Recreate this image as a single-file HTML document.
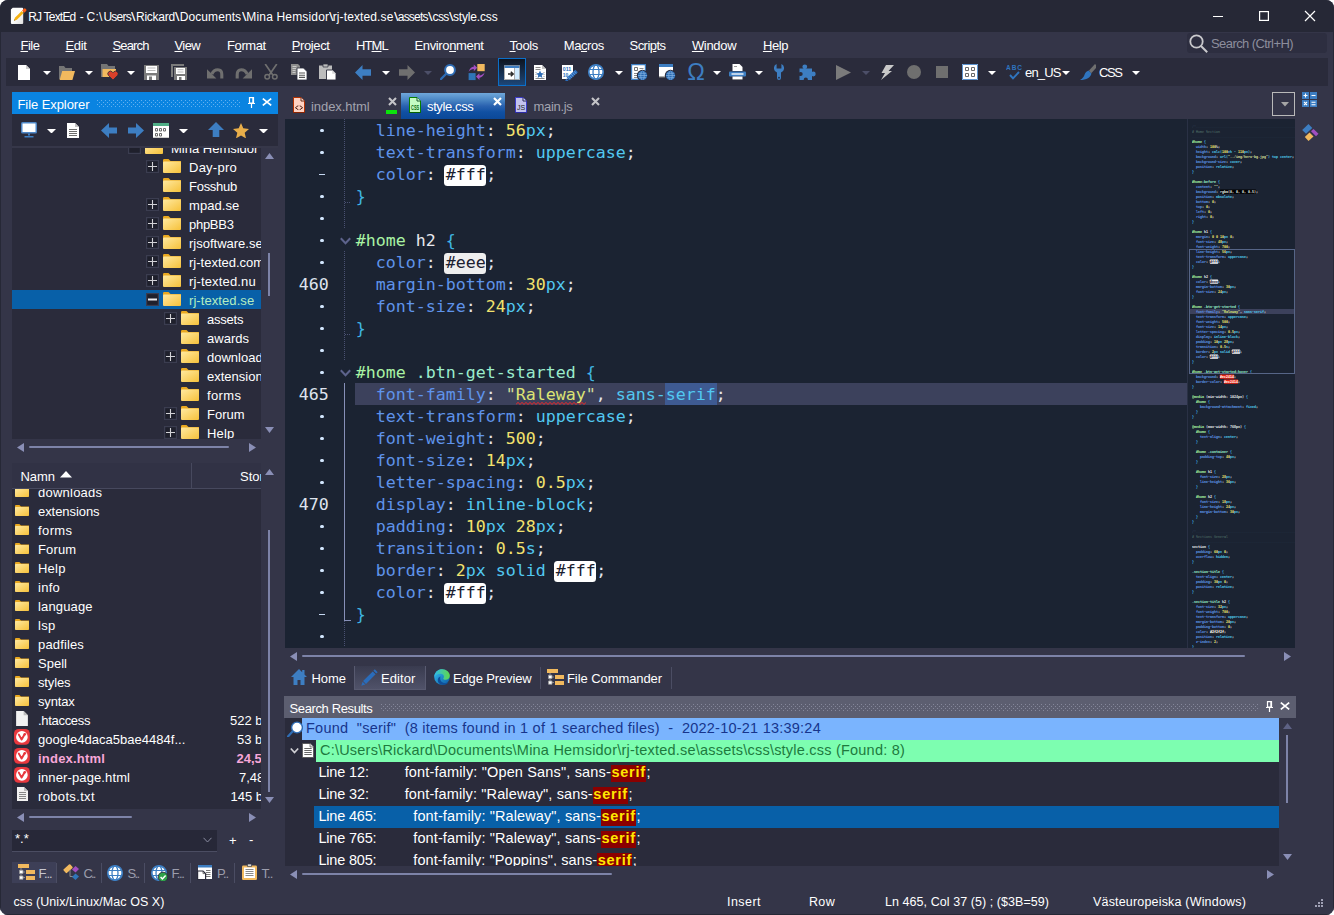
<!DOCTYPE html>
<html lang="en"><head><meta charset="utf-8"><title>RJ TextEd</title>
<style>
html,body{margin:0;padding:0;background:#fff;}
body{width:1334px;height:915px;overflow:hidden;position:relative;font-family:"Liberation Sans",sans-serif;}
#win{position:absolute;left:0;top:0;width:1334px;height:915px;background:#343548;border-radius:8px;overflow:hidden;}
.tx{position:absolute;white-space:pre;line-height:20px;height:20px;}
u{text-decoration:underline;text-underline-offset:1px;}
.mono{font-family:"DejaVu Sans Mono","Liberation Mono",monospace;}
.clip{position:absolute;overflow:hidden;}
/* code colours */
.code{position:absolute;white-space:pre;font-family:"DejaVu Sans Mono","Liberation Mono",monospace;font-size:16.61px;line-height:22px;color:#e4e6ee;}
.p{color:#5f93ea}.v{color:#52c8f0}.n{color:#f2e26e}.s{color:#d3dc9a}.sq{color:#dde474}.b{color:#3fb6e2}.q{color:#e4e6ee}
.si{color:#a9f3a4}.sc{color:#9aeccc}.st{color:#e8e8ee}.cm{color:#5d8a6a}.at{color:#a9f3a4}
.sw{background:#fff;color:#1b2030;border-radius:3.500px;margin-left:-1.500px;padding:0 .5px 1.500px 1.500px;}
.mm .cm{color:#54736c;font-weight:400}.mm .cmd{color:#2f3d55}


</style></head><body>
<div id="win">
<div style="position:absolute;left:0px;top:0px;width:1334px;height:32px;background:#262836;"></div>
<svg style="position:absolute;left:8px;top:6px" width="19" height="19" viewBox="0 0 19 19"><defs><linearGradient id="apg" x1="0" y1="0" x2="1" y2="1"><stop offset=".5" stop-color="#fdfdfd"/><stop offset="1" stop-color="#dedede"/></linearGradient></defs><path d="M4.700 1.800h9.500a1 1 0 0 1 1 1v14.300a1 1 0 0 1-1 1H3.900a1 1 0 0 1-1-1V3.600z" fill="url(#apg)"/><path d="M5.900 14.800 6.900 11.800 13.700 5 15.700 7 8.900 13.800z" fill="#f6b212"/><path d="M5.900 14.800l.5-1.500 1 1z" fill="#8a6a3a"/><path d="M14.100 4.600 15.900 2.800a1.200 1.200 0 0 1 1.700 0l.5.500a1.200 1.200 0 0 1 0 1.700L16.300 6.800z" fill="#f85a14"/></svg>
<div id="t1" class="tx " style="left:28.2px;top:6.84px;font-size:12px;color:#fff;letter-spacing:-0.797px;">RJ TextEd</div>
<div id="t2" class="tx " style="left:79.8px;top:6.84px;font-size:12px;color:#fff;">-</div>
<div id="t3" class="tx " style="left:86.6px;top:6.84px;font-size:12px;color:#fff;letter-spacing:0.219px;">C:\</div>
<div id="t4" class="tx " style="left:103.4px;top:6.84px;font-size:12px;color:#fff;letter-spacing:-0.729px;">Users</div>
<div id="t5" class="tx " style="left:131.4px;top:6.84px;font-size:12px;color:#fff;transform:scaleX(1.350);transform-origin:0 0;">\</div>
<div id="t6" class="tx " style="left:136.0px;top:6.84px;font-size:12px;color:#fff;letter-spacing:-0.241px;">Rickard</div>
<div id="t7" class="tx " style="left:175.2px;top:6.84px;font-size:12px;color:#fff;transform:scaleX(1.350);transform-origin:0 0;">\</div>
<div id="t8" class="tx " style="left:179.8px;top:6.84px;font-size:12px;color:#fff;letter-spacing:0.077px;">Documents</div>
<div id="t9" class="tx " style="left:241.5px;top:6.84px;font-size:12px;color:#fff;transform:scaleX(1.350);transform-origin:0 0;">\</div>
<div id="t10" class="tx " style="left:246.3px;top:6.84px;font-size:12px;color:#fff;letter-spacing:0.169px;">Mina Hemsidor</div>
<div id="t11" class="tx " style="left:329.2px;top:6.84px;font-size:12px;color:#fff;transform:scaleX(1.350);transform-origin:0 0;">\</div>
<div id="t12" class="tx " style="left:332.7px;top:6.84px;font-size:12px;color:#fff;letter-spacing:0.120px;">rj-texted.se</div>
<div id="t13" class="tx " style="left:393.7px;top:6.84px;font-size:12px;color:#fff;transform:scaleX(1.350);transform-origin:0 0;">\</div>
<div id="t14" class="tx " style="left:397.8px;top:6.84px;font-size:12px;color:#fff;letter-spacing:-0.815px;">assets</div>
<div id="t15" class="tx " style="left:427.9px;top:6.84px;font-size:12px;color:#fff;transform:scaleX(1.350);transform-origin:0 0;">\</div>
<div id="t16" class="tx " style="left:432.5px;top:6.84px;font-size:12px;color:#fff;letter-spacing:-0.600px;">css</div>
<div id="t17" class="tx " style="left:448.9px;top:6.84px;font-size:12px;color:#fff;transform:scaleX(1.350);transform-origin:0 0;">\</div>
<div id="t18" class="tx " style="left:453.0px;top:6.84px;font-size:12px;color:#fff;letter-spacing:-0.168px;">style.css</div>
<div style="position:absolute;left:1213px;top:16px;width:10px;height:1px;background:#fff;"></div>
<svg style="position:absolute;left:1258px;top:10px;" width="12" height="12" viewBox="0 0 12 12"><rect x="1.600" y="1.600" width="8.800" height="8.800" fill="none" stroke="#fff" stroke-width="1.200"/></svg>
<svg style="position:absolute;left:1304px;top:10px;" width="12" height="12" viewBox="0 0 12 12"><path d="M1 1l10 10M11 1 1 11" stroke="#fff" stroke-width="1.200"/></svg>
<div id="t19" class="tx " style="left:20.5px;top:35.50px;font-size:13px;color:#fff;letter-spacing:-0.492px;"><u>F</u>ile</div>
<div id="t20" class="tx " style="left:65.5px;top:35.50px;font-size:13px;color:#fff;letter-spacing:-0.352px;"><u>E</u>dit</div>
<div id="t21" class="tx " style="left:112.5px;top:35.50px;font-size:13px;color:#fff;letter-spacing:-0.867px;"><u>S</u>earch</div>
<div id="t22" class="tx " style="left:174.5px;top:35.50px;font-size:13px;color:#fff;letter-spacing:-0.588px;"><u>V</u>iew</div>
<div id="t23" class="tx " style="left:227.0px;top:35.50px;font-size:13px;color:#fff;letter-spacing:-0.398px;">F<u>o</u>rmat</div>
<div id="t24" class="tx " style="left:291.8px;top:35.50px;font-size:13px;color:#fff;letter-spacing:-0.396px;"><u>P</u>roject</div>
<div id="t25" class="tx " style="left:355.9px;top:35.50px;font-size:13px;color:#fff;letter-spacing:-0.855px;">HT<u>M</u>L</div>
<div id="t26" class="tx " style="left:414.5px;top:35.50px;font-size:13px;color:#fff;letter-spacing:-0.364px;">Enviro<u>n</u>ment</div>
<div id="t27" class="tx " style="left:509.5px;top:35.50px;font-size:13px;color:#fff;letter-spacing:-0.412px;"><u>T</u>ools</div>
<div id="t28" class="tx " style="left:563.8px;top:35.50px;font-size:13px;color:#fff;letter-spacing:-0.438px;">Ma<u>c</u>ros</div>
<div id="t29" class="tx " style="left:629.5px;top:35.50px;font-size:13px;color:#fff;letter-spacing:-0.536px;">Scri<u>p</u>ts</div>
<div id="t30" class="tx " style="left:691.9px;top:35.50px;font-size:13px;color:#fff;letter-spacing:-0.308px;"><u>W</u>indow</div>
<div id="t31" class="tx " style="left:762.9px;top:35.50px;font-size:13px;color:#fff;letter-spacing:-0.362px;"><u>H</u>elp</div>
<div style="position:absolute;left:1187px;top:33px;width:140px;height:20px;background:#2d2e40;border-radius:3px;"></div>
<svg style="position:absolute;left:1189px;top:34px" width="19" height="19" viewBox="0 0 19 19"><circle cx="7.500" cy="7.500" r="6.200" fill="none" stroke="#c9c9cc" stroke-width="1.800"/><path d="M12 12l6.200 6.200" stroke="#c9c9cc" stroke-width="2"/></svg>
<div id="t32" class="tx " style="left:1211px;top:33.50px;font-size:13px;color:#8c8d9c;letter-spacing:-0.578px;">Search (Ctrl+H)</div>
<div style="position:absolute;left:6px;top:58px;width:1322px;height:28px;background:#2a2b3b;"></div>
<svg style="position:absolute;left:18px;top:65px" width="12" height="15" viewBox="0 0 12 15"><path d="M0 0h8l4 4v11H0z" fill="#fff"/><path d="M8 0v4h4z" fill="#cfcfcf"/></svg>
<svg style="position:absolute;left:43px;top:71px" width="8" height="4" viewBox="0 0 8 4"><path d="M0 0h8L4 4z" fill="#fff"/></svg>
<svg style="position:absolute;left:58.2px;top:65px" width="17" height="15" viewBox="0 0 17 15"><path d="M1 1h5l1.5 2H14v4H1z" fill="#757575"/><path d="M1 3v11h1.5L5 6H1z" fill="#757575"/><path d="M4.2 6H17l-2.6 9H1.6z" fill="#f1b95e"/></svg>
<svg style="position:absolute;left:85px;top:71px" width="8" height="4" viewBox="0 0 8 4"><path d="M0 0h8L4 4z" fill="#fff"/></svg>
<svg style="position:absolute;left:101px;top:64px" width="17" height="16" viewBox="0 0 17 16"><path d="M0 0h6l1.5 2H14v5H0z" fill="#757575"/><path d="M0 2h2v11H0z" fill="#757575"/><path d="M1.5 5H15v8H1.5z" fill="#f1b95e"/><path d="M12 16 7.6 11.6a2.6 2.6 0 0 1 3.7-3.7l.7.7.7-.7a2.6 2.6 0 0 1 3.7 3.7z" fill="#d8402a" stroke="#2a2b3a" stroke-width=".8"/></svg>
<svg style="position:absolute;left:127px;top:71px" width="8" height="4" viewBox="0 0 8 4"><path d="M0 0h8L4 4z" fill="#fff"/></svg>
<svg style="position:absolute;left:144px;top:65px" width="15" height="15" viewBox="0 0 15 15"><path d="M0 0h15v15H0z" fill="#7b7b7b"/><path d="M2 1h11v7H2z" fill="#fff"/><path d="M3.5 3h8M3.5 5.5h8" stroke="#b9b9b9" stroke-width="1"/><path d="M3 10.5h9V15H3z" fill="#fff"/><path d="M5 11.5h3V15H5z" fill="#7b7b7b"/></svg>
<svg style="position:absolute;left:171px;top:64px" width="16" height="16" viewBox="0 0 16 16"><path d="M0 0h13v2H2v11H0z" fill="#7b7b7b"/><path d="M3 3h13v13H3z" fill="#7b7b7b"/><path d="M5 4h9v6H5z" fill="#fff"/><path d="M6.5 5.7h6M6.5 8h6" stroke="#b9b9b9" stroke-width="1"/><path d="M6 12h8v4H6z" fill="#fff"/><path d="M8 13h2.5v3H8z" fill="#7b7b7b"/></svg>
<svg style="position:absolute;left:206.7px;top:67.7px" width="17" height="11" viewBox="0 0 17 11"><path d="M0 1.200V10.500H9.400z" fill="#6f6f6f"/><path d="M4.800 6.200C6.200 3 8.600 1.800 10.800 1.800c2.600 0 4 1.900 4 4.600V10.500" fill="none" stroke="#6f6f6f" stroke-width="3.100"/></svg>
<svg style="position:absolute;left:234.5px;top:67.7px" width="17" height="11" viewBox="0 0 17 11"><path d="M17 1.200V10.500H7.600z" fill="#6f6f6f"/><path d="M12.200 6.200C10.800 3 8.400 1.800 6.200 1.800c-2.600 0-4 1.900-4 4.600V10.500" fill="none" stroke="#6f6f6f" stroke-width="3.100"/></svg>
<svg style="position:absolute;left:264px;top:64px" width="14" height="16" viewBox="0 0 14 16"><path d="M1.2 0 8.8 11M12.8 0 5.2 11" stroke="#6f6f6f" stroke-width="1.7" fill="none"/><circle cx="3.2" cy="12.8" r="2.3" fill="none" stroke="#6f6f6f" stroke-width="1.5"/><circle cx="10.8" cy="12.8" r="2.3" fill="none" stroke="#6f6f6f" stroke-width="1.5"/></svg>
<svg style="position:absolute;left:291px;top:64px" width="16" height="16" viewBox="0 0 16 16"><path d="M0 0h7l2 2v9H0z" fill="#8d8d8d"/><path d="M1.5 2.5h4M1.5 4.5h4M1.5 6.5h3M1.5 8.5h3" stroke="#c9c9c9" stroke-width="1"/><path d="M6 4h6.5L16 7.500V16H6z" fill="#fff" stroke="#2a2b3a" stroke-width=".8"/><path d="M8 9h6M8 11.200h6M8 13.400h6" stroke="#555" stroke-width="1.1"/></svg>
<svg style="position:absolute;left:318.5px;top:64px" width="17" height="16" viewBox="0 0 17 16"><path d="M0 1.500h13V15H0z" fill="#bdbdbd"/><path d="M4 0h5v3H4z" fill="#bdbdbd" stroke="#2a2b3a" stroke-width=".7"/><path d="M7.500 6h6L17 9.500V16H7.500z" fill="#fff" stroke="#2a2b3a" stroke-width=".9"/><path d="M13.200 6v3.700H17z" fill="#d8d8d8"/></svg>
<svg style="position:absolute;left:354.5px;top:65px" width="16" height="15" viewBox="0 0 16 15"><path d="M0 7.500 7.500 0v4.300H16v6.400H7.500V15z" fill="#3d7ec2"/></svg>
<svg style="position:absolute;left:381.5px;top:71px" width="8" height="4" viewBox="0 0 8 4"><path d="M0 0h8L4 4z" fill="#fff"/></svg>
<svg style="position:absolute;left:398.5px;top:65px" width="16" height="15" viewBox="0 0 16 15"><path d="M16 7.500 8.500 0v4.300H0v6.400h8.500V15z" fill="#6f6f6f"/></svg>
<svg style="position:absolute;left:423.5px;top:71px" width="8" height="4" viewBox="0 0 8 4"><path d="M0 0h8L4 4z" fill="#4c4f68"/></svg>
<svg style="position:absolute;left:440px;top:64px" width="16" height="16" viewBox="0 0 16 16"><path d="M1 15 6.500 9.500" stroke="#2f6db5" stroke-width="2.400" stroke-linecap="round"/><circle cx="10" cy="6" r="4.900" fill="#fff" stroke="#2f6db5" stroke-width="2"/></svg>
<svg style="position:absolute;left:467.5px;top:64px" width="17" height="17" viewBox="0 0 17 17"><path d="M9.300 0h7.400v7.200H9.300z" fill="#f1b95e"/><path d="M.6 9.100h7v7H.6z" fill="#2f75b8"/><path d="M.6 7.800C1.400 4.200 4.200 2.500 5.800 2.700V.4L9.200 3.800 5.800 7.200V5C4.300 4.700 2.300 5.700.6 7.800z" fill="#a24fc0"/><path d="M16.600 8.600c-.8 3.600-3.600 5.300-5.200 5.100V16L8 12.600l3.400-3.400v2.200c1.500.3 3.500-.7 5.200-2.800z" fill="#a24fc0"/></svg>
<div style="position:absolute;left:498px;top:58px;width:28px;height:28px;background:linear-gradient(#0e1520,#1d4677);box-sizing:border-box;border:1px solid #0b6fc9;"></div>
<svg style="position:absolute;left:504px;top:65px" width="16" height="15" viewBox="0 0 16 15"><path d="M0 0h16v15H0z" fill="#fff"/><path d="M0 0h16v3H0z" fill="#3d7ec2"/><path d="M10.500 3h5.500v12h-5.500z" fill="#d0ebff"/><path d="M10.500 3v12" stroke="#9a9a9a" stroke-width=".8"/><path d="M.4 .4h15.200v14.200H.4z" fill="none" stroke="#8f8f8f" stroke-width=".8"/><path d="M4 9h5M6.800 6.700 9.200 9l-2.400 2.300" stroke="#2b2b2b" stroke-width="1.500" fill="none"/></svg>
<svg style="position:absolute;left:533.5px;top:64.5px" width="12" height="15" viewBox="0 0 12 15"><path d="M0 0h8l4 4v11H0z" fill="#fff"/><path d="M8 0v4h4z" fill="#c4c4c4"/><path d="M1.500 2.500h5M1.500 4.500h5M1.500 13.500h9" stroke="#8a8a8a" stroke-width="1"/><path d="M1.500 7.500h1M1.500 9.500h1M1.500 11.500h1M9.500 7.500h1M9.500 9.500h1M9.500 11.500h1" stroke="#9a9a9a" stroke-width="1"/><path d="M6 5.600 7.100 8.100l2.700.3-2 1.800.6 2.700L6 11.500l-2.400 1.400.6-2.700-2-1.800 2.700-.3z" fill="#2f6db5"/></svg>
<svg style="position:absolute;left:561.8px;top:64.7px" width="16" height="16" viewBox="0 0 16 16"><path d="M0 0h11v8l-5.500 6H0z" fill="#fff"/><text x=".8" y="6" font-size="6.200" font-family="Liberation Sans,sans-serif" font-weight="700" fill="#2a6cba" opacity=".99" textLength="8.500" lengthAdjust="spacingAndGlyphs">011</text><text x=".8" y="11.600" font-size="6.200" font-family="Liberation Sans,sans-serif" font-weight="700" fill="#2a6cba" opacity=".99" textLength="5.600" lengthAdjust="spacingAndGlyphs">10</text><path d="M13.300 4.800 15.800 7.300 7.200 15.300 4.700 12.800z" fill="#2a6cba"/><path d="M4.200 13.400 6.600 15.800 3 16.500z" fill="#2a6cba"/><path d="M12 6.200l2.500 2.500M10.500 7.600l2.500 2.500M9 9l2.500 2.500M7.500 10.400l2.500 2.500M6 11.800l2.500 2.500" stroke="#7fb0e4" stroke-width=".6"/></svg>
<svg style="position:absolute;left:588px;top:64px" width="16" height="16" viewBox="0 0 16 16"><circle cx="8" cy="8" r="7.200" fill="#fff" stroke="#3d7ec2" stroke-width="1.700"/><path d="M1.500 5.500h13M1.500 10.500h13" stroke="#3d7ec2" stroke-width="1.200"/><ellipse cx="8" cy="8" rx="3" ry="7.200" fill="none" stroke="#3d7ec2" stroke-width="1.300"/></svg>
<svg style="position:absolute;left:615px;top:71px" width="8" height="4" viewBox="0 0 8 4"><path d="M0 0h8L4 4z" fill="#fff"/></svg>
<svg style="position:absolute;left:631px;top:64px" width="17" height="16" viewBox="0 0 17 16"><path d="M.6 .6h13.800v14.800H.6z" fill="#fff" stroke="#3d7ec2" stroke-width="1.200"/><path d="M3.500 3.500h3v3h-3z" fill="none" stroke="#777" stroke-width="1"/><path d="M8.500 4.500h4M3 9.500h4M3 11.500h3M3 13.500h3" stroke="#8d8d8d" stroke-width="1"/><circle cx="11.500" cy="11.500" r="5.700" fill="#2a2b3b"/><circle cx="11.500" cy="11.500" r="4.700" fill="#2b6bb3"/><path d="M7 11.500h9M7.800 9.300h7.400M7.800 13.700h7.400" stroke="#86b4e2" stroke-width=".7"/><ellipse cx="11.500" cy="11.500" rx="1.800" ry="4.600" fill="none" stroke="#86b4e2" stroke-width=".7"/></svg>
<svg style="position:absolute;left:659px;top:64px" width="17" height="16" viewBox="0 0 17 16"><path d="M0 0h14v13H0z" fill="#fff"/><path d="M0 0h14v3H0z" fill="#3d7ec2"/><path d="M0 13h14" stroke="#777" stroke-width="1.200"/><circle cx="11.500" cy="11.500" r="5.700" fill="#2a2b3b"/><circle cx="11.500" cy="11.500" r="4.700" fill="#2b6bb3"/><path d="M7 11.500h9M7.800 9.300h7.400M7.800 13.700h7.400" stroke="#86b4e2" stroke-width=".7"/><ellipse cx="11.500" cy="11.500" rx="1.800" ry="4.600" fill="none" stroke="#86b4e2" stroke-width=".7"/></svg>
<div id="t33" class="tx " style="left:687.3px;top:61.86px;font-size:23.5px;color:#3d7ec2;font-family:"Liberation Serif","DejaVu Serif",serif;transform:scaleX(.86);transform-origin:0 0;-webkit-text-stroke:.6px #3d7ec2;">Ω</div>
<svg style="position:absolute;left:712.5px;top:71px" width="8" height="4" viewBox="0 0 8 4"><path d="M0 0h8L4 4z" fill="#fff"/></svg>
<svg style="position:absolute;left:728.5px;top:64px" width="17" height="16" viewBox="0 0 17 16"><path d="M3.500 0h7l3 3v4h-10z" fill="#fff"/><path d="M5 2.500h3" stroke="#999" stroke-width="1"/><rect x="0" y="7.500" width="17" height="5" rx="1" fill="#3d7ec2"/><path d="M2.500 10h12" stroke="#dfeaf6" stroke-width="1.600"/><path d="M3.500 12.500h10V15h-10z" fill="#fff"/><path d="M3.500 15.500h10" stroke="#8a8a8a" stroke-width="1"/></svg>
<svg style="position:absolute;left:754.5px;top:71px" width="8" height="4" viewBox="0 0 8 4"><path d="M0 0h8L4 4z" fill="#fff"/></svg>
<svg style="position:absolute;left:773.5px;top:64px" width="10" height="16" viewBox="0 0 10 16"><path d="M2.600 0A4.600 4.600 0 0 0 3 8.500V14a2 2 0 0 0 4 0V8.500A4.600 4.600 0 0 0 7.400 0V4.500H2.600z" fill="#3d7ec2"/><circle cx="5" cy="13.700" r=".9" fill="#2a2b3b"/></svg>
<svg style="position:absolute;left:798.5px;top:64.2px" width="17" height="16" viewBox="0 0 17 16"><path d="M.5 4.500h12.500v11.500H.5z" fill="#3d7ec2"/><circle cx="5.800" cy="2.800" r="2.400" fill="#3d7ec2"/><circle cx="14.300" cy="10" r="2.400" fill="#3d7ec2"/><circle cx="1.600" cy="10" r="2.100" fill="#2a2b3b"/><circle cx="6.800" cy="15.700" r="2.100" fill="#2a2b3b"/></svg>
<svg style="position:absolute;left:835.5px;top:65px" width="15" height="15" viewBox="0 0 15 15"><path d="M0 0 15 7.500 0 15z" fill="#7b7b7b"/></svg>
<svg style="position:absolute;left:861.5px;top:71px" width="8" height="4" viewBox="0 0 8 4"><path d="M0 0h8L4 4z" fill="#4c4f68"/></svg>
<svg style="position:absolute;left:880px;top:64.5px" width="14" height="15" viewBox="0 0 14 15"><path d="M6 0h8L8.500 6H12L1 15 5 8H1.500z" fill="#c9c9c9"/></svg>
<svg style="position:absolute;left:907px;top:65px" width="14" height="14" viewBox="0 0 14 14"><circle cx="7" cy="7" r="7" fill="#6f6f6f"/></svg>
<svg style="position:absolute;left:936px;top:66px" width="12" height="12" viewBox="0 0 12 12"><path d="M0 0h12v12H0z" fill="#6f6f6f"/></svg>
<svg style="position:absolute;left:962px;top:64px" width="16" height="16" viewBox="0 0 16 16"><path d="M0 0h16v16H0z" fill="#fff"/><path d="M.5 .5h15v15H.5z" fill="none" stroke="#5c93cf" stroke-width="1"/><path d="M3.500 3.500h3v3h-3zM9.500 3.500h3v3h-3zM3.500 9.500h3v3h-3zM9.500 9.500h3v3h-3z" fill="#fff" stroke="#6a6a6a" stroke-width="1"/></svg>
<svg style="position:absolute;left:987.5px;top:71px" width="8" height="4" viewBox="0 0 8 4"><path d="M0 0h8L4 4z" fill="#fff"/></svg>
<svg style="position:absolute;left:1005.5px;top:65px" width="16" height="15" viewBox="0 0 16 15"><text x="0" y="5" font-size="6.500" font-family="Liberation Sans,sans-serif" font-weight="700" fill="#2f75c0" textLength="16">ABC</text><path d="M4 10l3 3.400L13 7" stroke="#2f75c0" stroke-width="1.900" fill="none"/></svg>
<div id="t34" class="tx " style="left:1025px;top:62.50px;font-size:13px;color:#fff;letter-spacing:-0.850px;">en_US</div>
<svg style="position:absolute;left:1061.5px;top:71px" width="8" height="4" viewBox="0 0 8 4"><path d="M0 0h8L4 4z" fill="#fff"/></svg>
<svg style="position:absolute;left:1079.5px;top:64px" width="16" height="16" viewBox="0 0 16 16"><path d="M9 6.500 15 0l1 1v3l-5 5.500z" fill="#6f6f6f"/><path d="M8.600 6.600l2.800 2.800c-.4 3.600-5 6.600-11.400 6.600 3-1.600 4-3.400 4.600-5.400.6-1.800 2-3.400 4-4z" fill="#2f75c0"/></svg>
<div id="t35" class="tx " style="left:1099px;top:62.50px;font-size:13px;color:#fff;letter-spacing:-1.411px;">CSS</div>
<svg style="position:absolute;left:1131.5px;top:71px" width="8" height="4" viewBox="0 0 8 4"><path d="M0 0h8L4 4z" fill="#fff"/></svg>
<div style="position:absolute;left:12px;top:92px;width:266px;height:22px;background:#0a84e1;"></div>
<div id="t36" class="tx " style="left:17.5px;top:94.50px;font-size:13px;color:#fff;letter-spacing:-0.075px;">File Explorer</div>
<svg style="position:absolute;left:97px;top:100px;" width="144" height="7" viewBox="0 0 144 7"><defs><pattern id="gp1" width="4" height="4" patternUnits="userSpaceOnUse"><rect x="0" y="0" width="1" height="1" fill="#62b0f0"/><rect x="2" y="2" width="1" height="1" fill="#62b0f0"/></pattern></defs><rect width="144" height="7" fill="url(#gp1)"/></svg>
<svg style="position:absolute;left:248px;top:97px" width="7" height="11" viewBox="0 0 7 11"><path d="M1.500 0.600h4v5.400h-4zM0 6.500h7M3.500 6.500V11" stroke="#fff" stroke-width="1.200" fill="none"/><path d="M4.300 1h1.200v5H4.300z" fill="#fff"/></svg>
<svg style="position:absolute;left:262px;top:98px" width="10" height="8" viewBox="0 0 10 8"><path d="M.8 .6l8.400 6.800M9.200 .6.800 7.400" stroke="#fff" stroke-width="1.700"/></svg>
<div style="position:absolute;left:12px;top:114px;width:266px;height:32px;background:#2a2b3b;"></div>
<div style="position:absolute;left:12px;top:146px;width:266px;height:2px;background:#363749;"></div>
<svg style="position:absolute;left:21px;top:122px" width="16" height="16" viewBox="0 0 16 16"><rect x="0" y="0" width="16" height="11.500" rx="1.500" fill="#4d86c6"/><path d="M1.500 1.500h13v8.500h-13z" fill="#fff"/><path d="M7 11.500h2v2H7zM3.500 14h9v1.500h-9z" fill="#3d7ec2"/></svg>
<svg style="position:absolute;left:47px;top:128.5px" width="9" height="4.5" viewBox="0 0 8 4"><path d="M0 0h8L4 4z" fill="#fff"/></svg>
<svg style="position:absolute;left:66.5px;top:122.5px" width="12" height="15" viewBox="0 0 12 15"><path d="M0 0h8l4 4v11H0z" fill="#fff"/><path d="M8 0v4h4z" fill="#c4c4c4"/><path d="M2 6.500h8M2 8.500h8M2 10.500h8M2 12.500h8" stroke="#6d6d6d" stroke-width="1"/></svg>
<svg style="position:absolute;left:100.5px;top:123px" width="16" height="15" viewBox="0 0 16 15"><path d="M0 7.500 8 0v4.500h8v6H8V15z" fill="#3d7ec2"/></svg>
<svg style="position:absolute;left:127.5px;top:123px" width="16" height="15" viewBox="0 0 16 15"><path d="M16 7.500 8 0v4.500H0v6h8V15z" fill="#3d7ec2"/></svg>
<svg style="position:absolute;left:153px;top:122.7px" width="16" height="15" viewBox="0 0 16 15"><path d="M0 0h16v15H0z" fill="#fff"/><path d="M0 0h16v3H0z" fill="#4fae86"/><path d="M0 15h16" stroke="#9a9a9a" stroke-width="1"/><path d="M2.500 5.500h2v2.500h-2zM6.500 5.500h2v2.500h-2zM10.500 5.500h2v2.500h-2zM2.500 10.500h2v2.500h-2zM6.500 10.500h2v2.500h-2z" fill="#fff" stroke="#6a6a6a" stroke-width="1"/></svg>
<svg style="position:absolute;left:178.5px;top:128.5px" width="9" height="4.5" viewBox="0 0 8 4"><path d="M0 0h8L4 4z" fill="#fff"/></svg>
<svg style="position:absolute;left:207.5px;top:122px" width="16" height="15" viewBox="0 0 16 15"><path d="M8 0 16 8h-4.700v7H4.700V8H0z" fill="#3d7ec2"/></svg>
<svg style="position:absolute;left:233px;top:122.5px" width="16" height="15" viewBox="0 0 16 15"><path d="M8 0l2.300 5.300 5.700.6-4.300 3.900L13 15.400 8 12.400 3 15.400l1.300-5.600L0 5.900l5.700-.6z" fill="#e8ae4a"/></svg>
<svg style="position:absolute;left:258.5px;top:128.5px" width="9" height="4.5" viewBox="0 0 8 4"><path d="M0 0h8L4 4z" fill="#fff"/></svg>
<div class="clip" style="left:12px;top:148px;width:249px;height:291px;background:#2a2b3b">
<svg style="position:absolute;left:116px;top:-7px;" width="13" height="13" viewBox="0 0 13 13"><rect x=".6" y=".6" width="11.800" height="11.800" fill="#1f202c" stroke="#3b3d50" stroke-width="1.200"/></svg>
<svg style="position:absolute;left:133px;top:-8px" width="18" height="14" viewBox="0 0 18 14"><defs><linearGradient id="fg" x1="0" y1="0" x2="1" y2="1"><stop offset="0" stop-color="#ffe9a0"/><stop offset="1" stop-color="#f6c13a"/></linearGradient></defs><path d="M0 1.200A1.200 1.200 0 0 1 1.200 0h4.300l2 2H18v3H0z" fill="#e9a820"/><rect x="0" y="2.600" width="18" height="11.400" rx="1" fill="url(#fg)"/></svg>
<div id="t37" class="tx " style="left:159px;top:-9.20px;font-size:13px;color:#fff;">Mina Hemsidor</div>
<svg style="position:absolute;left:134px;top:12px;" width="13" height="13" viewBox="0 0 13 13"><rect x=".6" y=".6" width="11.800" height="11.800" fill="#1f202c" stroke="#3b3d50" stroke-width="1.200"/><path d="M2 6.500h9M6.500 2v9" stroke="#d2d2d6" stroke-width="1.100"/></svg>
<svg style="position:absolute;left:151px;top:11px" width="18" height="14" viewBox="0 0 18 14"><defs><linearGradient id="fg" x1="0" y1="0" x2="1" y2="1"><stop offset="0" stop-color="#ffe9a0"/><stop offset="1" stop-color="#f6c13a"/></linearGradient></defs><path d="M0 1.200A1.200 1.200 0 0 1 1.200 0h4.300l2 2H18v3H0z" fill="#e9a820"/><rect x="0" y="2.600" width="18" height="11.400" rx="1" fill="url(#fg)"/></svg>
<div id="t38" class="tx " style="left:177px;top:9.80px;font-size:13px;color:#fff;letter-spacing:0.250px;">Day-pro</div>
<svg style="position:absolute;left:151px;top:30px" width="18" height="14" viewBox="0 0 18 14"><defs><linearGradient id="fg" x1="0" y1="0" x2="1" y2="1"><stop offset="0" stop-color="#ffe9a0"/><stop offset="1" stop-color="#f6c13a"/></linearGradient></defs><path d="M0 1.200A1.200 1.200 0 0 1 1.200 0h4.300l2 2H18v3H0z" fill="#e9a820"/><rect x="0" y="2.600" width="18" height="11.400" rx="1" fill="url(#fg)"/></svg>
<div id="t39" class="tx " style="left:177px;top:28.80px;font-size:13px;color:#fff;letter-spacing:-0.268px;">Fosshub</div>
<svg style="position:absolute;left:134px;top:50px;" width="13" height="13" viewBox="0 0 13 13"><rect x=".6" y=".6" width="11.800" height="11.800" fill="#1f202c" stroke="#3b3d50" stroke-width="1.200"/><path d="M2 6.500h9M6.500 2v9" stroke="#d2d2d6" stroke-width="1.100"/></svg>
<svg style="position:absolute;left:151px;top:49px" width="18" height="14" viewBox="0 0 18 14"><defs><linearGradient id="fg" x1="0" y1="0" x2="1" y2="1"><stop offset="0" stop-color="#ffe9a0"/><stop offset="1" stop-color="#f6c13a"/></linearGradient></defs><path d="M0 1.200A1.200 1.200 0 0 1 1.200 0h4.300l2 2H18v3H0z" fill="#e9a820"/><rect x="0" y="2.600" width="18" height="11.400" rx="1" fill="url(#fg)"/></svg>
<div id="t40" class="tx " style="left:177px;top:47.80px;font-size:13px;color:#fff;letter-spacing:0.061px;">mpad.se</div>
<svg style="position:absolute;left:134px;top:69px;" width="13" height="13" viewBox="0 0 13 13"><rect x=".6" y=".6" width="11.800" height="11.800" fill="#1f202c" stroke="#3b3d50" stroke-width="1.200"/><path d="M2 6.500h9M6.500 2v9" stroke="#d2d2d6" stroke-width="1.100"/></svg>
<svg style="position:absolute;left:151px;top:68px" width="18" height="14" viewBox="0 0 18 14"><defs><linearGradient id="fg" x1="0" y1="0" x2="1" y2="1"><stop offset="0" stop-color="#ffe9a0"/><stop offset="1" stop-color="#f6c13a"/></linearGradient></defs><path d="M0 1.200A1.200 1.200 0 0 1 1.200 0h4.300l2 2H18v3H0z" fill="#e9a820"/><rect x="0" y="2.600" width="18" height="11.400" rx="1" fill="url(#fg)"/></svg>
<div id="t41" class="tx " style="left:177px;top:66.80px;font-size:13px;color:#fff;letter-spacing:-0.278px;">phpBB3</div>
<svg style="position:absolute;left:134px;top:88px;" width="13" height="13" viewBox="0 0 13 13"><rect x=".6" y=".6" width="11.800" height="11.800" fill="#1f202c" stroke="#3b3d50" stroke-width="1.200"/><path d="M2 6.500h9M6.500 2v9" stroke="#d2d2d6" stroke-width="1.100"/></svg>
<svg style="position:absolute;left:151px;top:87px" width="18" height="14" viewBox="0 0 18 14"><defs><linearGradient id="fg" x1="0" y1="0" x2="1" y2="1"><stop offset="0" stop-color="#ffe9a0"/><stop offset="1" stop-color="#f6c13a"/></linearGradient></defs><path d="M0 1.200A1.200 1.200 0 0 1 1.200 0h4.300l2 2H18v3H0z" fill="#e9a820"/><rect x="0" y="2.600" width="18" height="11.400" rx="1" fill="url(#fg)"/></svg>
<div id="t42" class="tx " style="left:177px;top:85.80px;font-size:13px;color:#fff;">rjsoftware.se</div>
<svg style="position:absolute;left:134px;top:107px;" width="13" height="13" viewBox="0 0 13 13"><rect x=".6" y=".6" width="11.800" height="11.800" fill="#1f202c" stroke="#3b3d50" stroke-width="1.200"/><path d="M2 6.500h9M6.500 2v9" stroke="#d2d2d6" stroke-width="1.100"/></svg>
<svg style="position:absolute;left:151px;top:106px" width="18" height="14" viewBox="0 0 18 14"><defs><linearGradient id="fg" x1="0" y1="0" x2="1" y2="1"><stop offset="0" stop-color="#ffe9a0"/><stop offset="1" stop-color="#f6c13a"/></linearGradient></defs><path d="M0 1.200A1.200 1.200 0 0 1 1.200 0h4.300l2 2H18v3H0z" fill="#e9a820"/><rect x="0" y="2.600" width="18" height="11.400" rx="1" fill="url(#fg)"/></svg>
<div id="t43" class="tx " style="left:177px;top:104.80px;font-size:13px;color:#fff;">rj-texted.com</div>
<svg style="position:absolute;left:134px;top:126px;" width="13" height="13" viewBox="0 0 13 13"><rect x=".6" y=".6" width="11.800" height="11.800" fill="#1f202c" stroke="#3b3d50" stroke-width="1.200"/><path d="M2 6.500h9M6.500 2v9" stroke="#d2d2d6" stroke-width="1.100"/></svg>
<svg style="position:absolute;left:151px;top:125px" width="18" height="14" viewBox="0 0 18 14"><defs><linearGradient id="fg" x1="0" y1="0" x2="1" y2="1"><stop offset="0" stop-color="#ffe9a0"/><stop offset="1" stop-color="#f6c13a"/></linearGradient></defs><path d="M0 1.200A1.200 1.200 0 0 1 1.200 0h4.300l2 2H18v3H0z" fill="#e9a820"/><rect x="0" y="2.600" width="18" height="11.400" rx="1" fill="url(#fg)"/></svg>
<div id="t44" class="tx " style="left:177px;top:123.80px;font-size:13px;color:#fff;letter-spacing:0.146px;">rj-texted.nu</div>
<div style="position:absolute;left:0px;top:142px;width:249px;height:19px;background:#0860a8;"></div>
<svg style="position:absolute;left:134px;top:145px;" width="13" height="13" viewBox="0 0 13 13"><rect x=".6" y=".6" width="11.800" height="11.800" fill="#1f202c" stroke="#3b3d50" stroke-width="1.200"/><path d="M2 6.500h9" stroke="#ececf0" stroke-width="2"/></svg>
<svg style="position:absolute;left:151px;top:144px" width="18" height="14" viewBox="0 0 18 14"><defs><linearGradient id="fg" x1="0" y1="0" x2="1" y2="1"><stop offset="0" stop-color="#ffe9a0"/><stop offset="1" stop-color="#f6c13a"/></linearGradient></defs><path d="M0 1.200A1.200 1.200 0 0 1 1.200 0h4.300l2 2H18v3H0z" fill="#e9a820"/><rect x="0" y="2.600" width="18" height="11.400" rx="1" fill="url(#fg)"/></svg>
<div id="t45" class="tx " style="left:177px;top:142.80px;font-size:13px;color:#b4ecc0;letter-spacing:0.074px;">rj-texted.se</div>
<svg style="position:absolute;left:152px;top:164px;" width="13" height="13" viewBox="0 0 13 13"><rect x=".6" y=".6" width="11.800" height="11.800" fill="#1f202c" stroke="#3b3d50" stroke-width="1.200"/><path d="M2 6.500h9M6.500 2v9" stroke="#d2d2d6" stroke-width="1.100"/></svg>
<svg style="position:absolute;left:169px;top:163px" width="18" height="14" viewBox="0 0 18 14"><defs><linearGradient id="fg" x1="0" y1="0" x2="1" y2="1"><stop offset="0" stop-color="#ffe9a0"/><stop offset="1" stop-color="#f6c13a"/></linearGradient></defs><path d="M0 1.200A1.200 1.200 0 0 1 1.200 0h4.300l2 2H18v3H0z" fill="#e9a820"/><rect x="0" y="2.600" width="18" height="11.400" rx="1" fill="url(#fg)"/></svg>
<div id="t46" class="tx " style="left:195px;top:161.80px;font-size:13px;color:#fff;letter-spacing:-0.213px;">assets</div>
<svg style="position:absolute;left:169px;top:182px" width="18" height="14" viewBox="0 0 18 14"><defs><linearGradient id="fg" x1="0" y1="0" x2="1" y2="1"><stop offset="0" stop-color="#ffe9a0"/><stop offset="1" stop-color="#f6c13a"/></linearGradient></defs><path d="M0 1.200A1.200 1.200 0 0 1 1.200 0h4.300l2 2H18v3H0z" fill="#e9a820"/><rect x="0" y="2.600" width="18" height="11.400" rx="1" fill="url(#fg)"/></svg>
<div id="t47" class="tx " style="left:195px;top:180.80px;font-size:13px;color:#fff;letter-spacing:0.013px;">awards</div>
<svg style="position:absolute;left:152px;top:202px;" width="13" height="13" viewBox="0 0 13 13"><rect x=".6" y=".6" width="11.800" height="11.800" fill="#1f202c" stroke="#3b3d50" stroke-width="1.200"/><path d="M2 6.500h9M6.500 2v9" stroke="#d2d2d6" stroke-width="1.100"/></svg>
<svg style="position:absolute;left:169px;top:201px" width="18" height="14" viewBox="0 0 18 14"><defs><linearGradient id="fg" x1="0" y1="0" x2="1" y2="1"><stop offset="0" stop-color="#ffe9a0"/><stop offset="1" stop-color="#f6c13a"/></linearGradient></defs><path d="M0 1.200A1.200 1.200 0 0 1 1.200 0h4.300l2 2H18v3H0z" fill="#e9a820"/><rect x="0" y="2.600" width="18" height="11.400" rx="1" fill="url(#fg)"/></svg>
<div id="t48" class="tx " style="left:195px;top:199.80px;font-size:13px;color:#fff;">downloads</div>
<svg style="position:absolute;left:169px;top:220px" width="18" height="14" viewBox="0 0 18 14"><defs><linearGradient id="fg" x1="0" y1="0" x2="1" y2="1"><stop offset="0" stop-color="#ffe9a0"/><stop offset="1" stop-color="#f6c13a"/></linearGradient></defs><path d="M0 1.200A1.200 1.200 0 0 1 1.200 0h4.300l2 2H18v3H0z" fill="#e9a820"/><rect x="0" y="2.600" width="18" height="11.400" rx="1" fill="url(#fg)"/></svg>
<div id="t49" class="tx " style="left:195px;top:218.80px;font-size:13px;color:#fff;">extensions</div>
<svg style="position:absolute;left:169px;top:239px" width="18" height="14" viewBox="0 0 18 14"><defs><linearGradient id="fg" x1="0" y1="0" x2="1" y2="1"><stop offset="0" stop-color="#ffe9a0"/><stop offset="1" stop-color="#f6c13a"/></linearGradient></defs><path d="M0 1.200A1.200 1.200 0 0 1 1.200 0h4.300l2 2H18v3H0z" fill="#e9a820"/><rect x="0" y="2.600" width="18" height="11.400" rx="1" fill="url(#fg)"/></svg>
<div id="t50" class="tx " style="left:195px;top:237.80px;font-size:13px;color:#fff;letter-spacing:0.360px;">forms</div>
<svg style="position:absolute;left:152px;top:259px;" width="13" height="13" viewBox="0 0 13 13"><rect x=".6" y=".6" width="11.800" height="11.800" fill="#1f202c" stroke="#3b3d50" stroke-width="1.200"/><path d="M2 6.500h9M6.500 2v9" stroke="#d2d2d6" stroke-width="1.100"/></svg>
<svg style="position:absolute;left:169px;top:258px" width="18" height="14" viewBox="0 0 18 14"><defs><linearGradient id="fg" x1="0" y1="0" x2="1" y2="1"><stop offset="0" stop-color="#ffe9a0"/><stop offset="1" stop-color="#f6c13a"/></linearGradient></defs><path d="M0 1.200A1.200 1.200 0 0 1 1.200 0h4.300l2 2H18v3H0z" fill="#e9a820"/><rect x="0" y="2.600" width="18" height="11.400" rx="1" fill="url(#fg)"/></svg>
<div id="t51" class="tx " style="left:195px;top:256.80px;font-size:13px;color:#fff;letter-spacing:-0.013px;">Forum</div>
<svg style="position:absolute;left:152px;top:278px;" width="13" height="13" viewBox="0 0 13 13"><rect x=".6" y=".6" width="11.800" height="11.800" fill="#1f202c" stroke="#3b3d50" stroke-width="1.200"/><path d="M2 6.500h9M6.500 2v9" stroke="#d2d2d6" stroke-width="1.100"/></svg>
<svg style="position:absolute;left:169px;top:277px" width="18" height="14" viewBox="0 0 18 14"><defs><linearGradient id="fg" x1="0" y1="0" x2="1" y2="1"><stop offset="0" stop-color="#ffe9a0"/><stop offset="1" stop-color="#f6c13a"/></linearGradient></defs><path d="M0 1.200A1.200 1.200 0 0 1 1.200 0h4.300l2 2H18v3H0z" fill="#e9a820"/><rect x="0" y="2.600" width="18" height="11.400" rx="1" fill="url(#fg)"/></svg>
<div id="t52" class="tx " style="left:195px;top:275.80px;font-size:13px;color:#fff;letter-spacing:0.162px;">Help</div>
</div>
<svg style="position:absolute;left:264.5px;top:153px" width="9" height="6" viewBox="0 0 9 6"><path d="M0 6h9L4.500 0z" fill="#8a8fb6"/></svg>
<svg style="position:absolute;left:264.5px;top:427px" width="9" height="6" viewBox="0 0 9 6"><path d="M0 0h9L4.500 6z" fill="#8a8fb6"/></svg>
<div style="position:absolute;left:268px;top:253px;width:2px;height:43px;background:#7d83a8;"></div>
<svg style="position:absolute;left:17px;top:443px" width="7" height="9" viewBox="0 0 7 9"><path d="M7 0v9L0 4.500z" fill="#8a8fb6"/></svg>
<svg style="position:absolute;left:249px;top:443px" width="7" height="9" viewBox="0 0 7 9"><path d="M0 0v9l7-4.500z" fill="#8a8fb6"/></svg>
<div style="position:absolute;left:29px;top:446px;width:200px;height:2px;background:#7d83a8;border-radius:1px;"></div>
<div style="position:absolute;left:12px;top:463px;width:249px;height:26px;background:#313245;"></div>
<div style="position:absolute;left:12px;top:488px;width:249px;height:1px;background:#47495e;"></div>
<div style="position:absolute;left:191px;top:463px;width:1px;height:25px;background:#47495e;"></div>
<div id="t53" class="tx " style="left:20.5px;top:466.50px;font-size:13px;color:#fff;letter-spacing:-0.047px;">Namn</div>
<svg style="position:absolute;left:59.5px;top:471px;" width="12" height="6.5" viewBox="0 0 12 6.5"><path d="M0 6.500h12L6 0z" fill="#fff"/></svg>
<div class="clip" style="left:192px;top:463px;width:69px;height:25px">
<div id="t54" class="tx " style="left:48px;top:3.50px;font-size:13px;color:#fff;">Storlek</div>
</div>
<div class="clip" style="left:12px;top:489px;width:249px;height:320px;background:#2a2b3b">
<svg style="position:absolute;left:3px;top:-3.5px" width="14" height="11" viewBox="0 0 14 11"><path d="M0 1A1 1 0 0 1 1 0h3.400l1.600 1.600H14V4H0z" fill="#e9a820"/><rect x="0" y="2" width="14" height="9" rx=".8" fill="url(#fg)"/></svg>
<div id="t55" class="tx " style="left:26px;top:-6.20px;font-size:13px;color:#fff;letter-spacing:0.238px;">downloads</div>
<svg style="position:absolute;left:3px;top:15.5px" width="14" height="11" viewBox="0 0 14 11"><path d="M0 1A1 1 0 0 1 1 0h3.400l1.600 1.600H14V4H0z" fill="#e9a820"/><rect x="0" y="2" width="14" height="9" rx=".8" fill="url(#fg)"/></svg>
<div id="t56" class="tx " style="left:26px;top:12.80px;font-size:13px;color:#fff;letter-spacing:-0.066px;">extensions</div>
<svg style="position:absolute;left:3px;top:34.5px" width="14" height="11" viewBox="0 0 14 11"><path d="M0 1A1 1 0 0 1 1 0h3.400l1.600 1.600H14V4H0z" fill="#e9a820"/><rect x="0" y="2" width="14" height="9" rx=".8" fill="url(#fg)"/></svg>
<div id="t57" class="tx " style="left:26px;top:31.80px;font-size:13px;color:#fff;letter-spacing:0.400px;">forms</div>
<svg style="position:absolute;left:3px;top:53.5px" width="14" height="11" viewBox="0 0 14 11"><path d="M0 1A1 1 0 0 1 1 0h3.400l1.600 1.600H14V4H0z" fill="#e9a820"/><rect x="0" y="2" width="14" height="9" rx=".8" fill="url(#fg)"/></svg>
<div id="t58" class="tx " style="left:26px;top:50.80px;font-size:13px;color:#fff;letter-spacing:0.128px;">Forum</div>
<svg style="position:absolute;left:3px;top:72.5px" width="14" height="11" viewBox="0 0 14 11"><path d="M0 1A1 1 0 0 1 1 0h3.400l1.600 1.600H14V4H0z" fill="#e9a820"/><rect x="0" y="2" width="14" height="9" rx=".8" fill="url(#fg)"/></svg>
<div id="t59" class="tx " style="left:26px;top:69.80px;font-size:13px;color:#fff;letter-spacing:0.213px;">Help</div>
<svg style="position:absolute;left:3px;top:91.5px" width="14" height="11" viewBox="0 0 14 11"><path d="M0 1A1 1 0 0 1 1 0h3.400l1.600 1.600H14V4H0z" fill="#e9a820"/><rect x="0" y="2" width="14" height="9" rx=".8" fill="url(#fg)"/></svg>
<div id="t60" class="tx " style="left:26px;top:88.80px;font-size:13px;color:#fff;letter-spacing:0.283px;">info</div>
<svg style="position:absolute;left:3px;top:110.5px" width="14" height="11" viewBox="0 0 14 11"><path d="M0 1A1 1 0 0 1 1 0h3.400l1.600 1.600H14V4H0z" fill="#e9a820"/><rect x="0" y="2" width="14" height="9" rx=".8" fill="url(#fg)"/></svg>
<div id="t61" class="tx " style="left:26px;top:107.80px;font-size:13px;color:#fff;letter-spacing:0.150px;">language</div>
<svg style="position:absolute;left:3px;top:129.5px" width="14" height="11" viewBox="0 0 14 11"><path d="M0 1A1 1 0 0 1 1 0h3.400l1.600 1.600H14V4H0z" fill="#e9a820"/><rect x="0" y="2" width="14" height="9" rx=".8" fill="url(#fg)"/></svg>
<div id="t62" class="tx " style="left:26px;top:126.80px;font-size:13px;color:#fff;letter-spacing:0.292px;">lsp</div>
<svg style="position:absolute;left:3px;top:148.5px" width="14" height="11" viewBox="0 0 14 11"><path d="M0 1A1 1 0 0 1 1 0h3.400l1.600 1.600H14V4H0z" fill="#e9a820"/><rect x="0" y="2" width="14" height="9" rx=".8" fill="url(#fg)"/></svg>
<div id="t63" class="tx " style="left:26px;top:145.80px;font-size:13px;color:#fff;letter-spacing:0.148px;">padfiles</div>
<svg style="position:absolute;left:3px;top:167.5px" width="14" height="11" viewBox="0 0 14 11"><path d="M0 1A1 1 0 0 1 1 0h3.400l1.600 1.600H14V4H0z" fill="#e9a820"/><rect x="0" y="2" width="14" height="9" rx=".8" fill="url(#fg)"/></svg>
<div id="t64" class="tx " style="left:26px;top:164.80px;font-size:13px;color:#fff;letter-spacing:0.016px;">Spell</div>
<svg style="position:absolute;left:3px;top:186.5px" width="14" height="11" viewBox="0 0 14 11"><path d="M0 1A1 1 0 0 1 1 0h3.400l1.600 1.600H14V4H0z" fill="#e9a820"/><rect x="0" y="2" width="14" height="9" rx=".8" fill="url(#fg)"/></svg>
<div id="t65" class="tx " style="left:26px;top:183.80px;font-size:13px;color:#fff;letter-spacing:-0.156px;">styles</div>
<svg style="position:absolute;left:3px;top:205.5px" width="14" height="11" viewBox="0 0 14 11"><path d="M0 1A1 1 0 0 1 1 0h3.400l1.600 1.600H14V4H0z" fill="#e9a820"/><rect x="0" y="2" width="14" height="9" rx=".8" fill="url(#fg)"/></svg>
<div id="t66" class="tx " style="left:26px;top:202.80px;font-size:13px;color:#fff;letter-spacing:-0.163px;">syntax</div>
<svg style="position:absolute;left:4px;top:221.5px" width="12" height="15" viewBox="0 0 11 14"><path d="M0 0h7l4 4v10H0z" fill="#f2f2f2"/><path d="M7 0v4h4z" fill="#bdbdbd"/></svg>
<div id="t67" class="tx " style="left:26px;top:221.80px;font-size:13px;color:#fff;letter-spacing:-0.302px;">.htaccess</div>
<div id="t68" class="tx " style="left:218px;top:221.80px;font-size:13px;color:#fff;">522 byte</div>
<svg style="position:absolute;left:2.2px;top:240.3px" width="15.8" height="15.8" viewBox="0 0 16 16"><rect x="0" y="0" width="16" height="16" rx="4.600" fill="#e8383e"/><circle cx="8" cy="8" r="5.900" fill="#fff"/><path d="M4.900 5.700 7.700 10.600 10.800 5.400" stroke="#e8383e" stroke-width="2" fill="none" stroke-linecap="round" stroke-linejoin="round"/><circle cx="10.900" cy="5.300" r="1.300" fill="#e8383e"/></svg>
<div id="t69" class="tx " style="left:26px;top:240.80px;font-size:13px;color:#fff;letter-spacing:0.024px;">google4daca5bae4484f...</div>
<div id="t70" class="tx " style="left:225px;top:240.80px;font-size:13px;color:#fff;">53 byte</div>
<svg style="position:absolute;left:2.2px;top:259.3px" width="15.8" height="15.8" viewBox="0 0 16 16"><rect x="0" y="0" width="16" height="16" rx="4.600" fill="#e8383e"/><circle cx="8" cy="8" r="5.900" fill="#fff"/><path d="M4.900 5.700 7.700 10.600 10.800 5.400" stroke="#e8383e" stroke-width="2" fill="none" stroke-linecap="round" stroke-linejoin="round"/><circle cx="10.900" cy="5.300" r="1.300" fill="#e8383e"/></svg>
<div id="t71" class="tx " style="left:26px;top:259.80px;font-size:13px;color:#f7a6d8;font-weight:700;letter-spacing:0.218px;">index.html</div>
<div id="t72" class="tx " style="left:224.5px;top:259.80px;font-size:13px;color:#f7a6d8;font-weight:700;">24,5 kB</div>
<svg style="position:absolute;left:2.2px;top:278.3px" width="15.8" height="15.8" viewBox="0 0 16 16"><rect x="0" y="0" width="16" height="16" rx="4.600" fill="#e8383e"/><circle cx="8" cy="8" r="5.900" fill="#fff"/><path d="M4.900 5.700 7.700 10.600 10.800 5.400" stroke="#e8383e" stroke-width="2" fill="none" stroke-linecap="round" stroke-linejoin="round"/><circle cx="10.900" cy="5.300" r="1.300" fill="#e8383e"/></svg>
<div id="t73" class="tx " style="left:26px;top:278.80px;font-size:13px;color:#fff;letter-spacing:0.118px;">inner-page.html</div>
<div id="t74" class="tx " style="left:227px;top:278.80px;font-size:13px;color:#fff;">7,48 kB</div>
<svg style="position:absolute;left:4.5px;top:298px" width="11" height="14" viewBox="0 0 11 14"><path d="M0 0h7l4 4v10H0z" fill="#f2f2f2"/><path d="M7 0v4h4z" fill="#bdbdbd"/><path d="M2 5.500h7M2 7.500h7M2 9.500h7M2 11.500h7" stroke="#888" stroke-width="1"/></svg>
<div id="t75" class="tx " style="left:26px;top:297.80px;font-size:13px;color:#fff;letter-spacing:0.343px;">robots.txt</div>
<div id="t76" class="tx " style="left:218.5px;top:297.80px;font-size:13px;color:#fff;">145 byte</div>
</div>
<svg style="position:absolute;left:264.5px;top:468.5px" width="9" height="6" viewBox="0 0 9 6"><path d="M0 6h9L4.500 0z" fill="#8a8fb6"/></svg>
<svg style="position:absolute;left:264.5px;top:797px" width="9" height="6" viewBox="0 0 9 6"><path d="M0 0h9L4.500 6z" fill="#8a8fb6"/></svg>
<div style="position:absolute;left:268px;top:530px;width:2px;height:262px;background:#7d83a8;"></div>
<svg style="position:absolute;left:17px;top:813px" width="7" height="9" viewBox="0 0 7 9"><path d="M7 0v9L0 4.500z" fill="#8a8fb6"/></svg>
<svg style="position:absolute;left:249px;top:813px" width="7" height="9" viewBox="0 0 7 9"><path d="M0 0v9l7-4.500z" fill="#8a8fb6"/></svg>
<div style="position:absolute;left:29px;top:816px;width:103px;height:2px;background:#7d83a8;border-radius:1px;"></div>
<div style="position:absolute;left:12px;top:830px;width:205px;height:22px;background:#272838;border-bottom:1px solid #4b4d62;box-sizing:border-box;"></div>
<div id="t77" class="tx " style="left:15px;top:828.50px;font-size:13px;color:#fff;">*.*</div>
<svg style="position:absolute;left:203px;top:837px;" width="9" height="6" viewBox="0 0 9 6"><path d="M.5 .8 4.500 5 8.500 .8" stroke="#8a8ca0" stroke-width="1" fill="none"/></svg>
<div id="t78" class="tx " style="left:229px;top:830.50px;font-size:13px;color:#fff;">+</div>
<div id="t79" class="tx " style="left:249px;top:829.50px;font-size:13px;color:#fff;">-</div>
<div style="position:absolute;left:12px;top:862px;width:44px;height:21px;background:#3d3f57;"></div>
<div style="position:absolute;left:56px;top:863px;width:1px;height:20px;background:#4b4d63;"></div>
<div style="position:absolute;left:100.5px;top:863px;width:1px;height:20px;background:#4b4d63;"></div>
<div style="position:absolute;left:144px;top:863px;width:1px;height:20px;background:#4b4d63;"></div>
<div style="position:absolute;left:189.5px;top:863px;width:1px;height:20px;background:#4b4d63;"></div>
<div style="position:absolute;left:234px;top:863px;width:1px;height:20px;background:#4b4d63;"></div>
<svg style="position:absolute;left:17.5px;top:864px" width="17" height="16" viewBox="0 0 17 16"><path d="M0 0h11v4H0z" fill="#f1b95e"/><path d="M3 4v10M3 8h4M3 13.500h4" stroke="#8a8a8a" stroke-width="1" fill="none"/><path d="M1.500 6.300h3.500v3.200H1.500zM1.500 12h3.500v3.200H1.500z" fill="#fff" stroke="#9a9a9a" stroke-width=".8"/><path d="M8 6h9v4H8zM8 12h9v4H8z" fill="#f1b95e"/></svg>
<div id="t80" class="tx " style="left:38.5px;top:863.50px;font-size:13px;color:#c6c6ce;letter-spacing:-1.086px;">F...</div>
<svg style="position:absolute;left:63px;top:864px" width="16" height="16" viewBox="0 0 16 16"><rect x="0" y="0" width="9" height="5" rx="1" transform="translate(0 5.800) rotate(-42)" fill="#f1b95e"/><path d="M7 6v6.500h3" stroke="#8a8a8a" stroke-width="1" fill="none"/><path d="M12.500 2 16 5 12.500 8.500 9 5.500z" fill="#a24fc0"/><path d="M12.500 9.500 16 12.500 12.500 16 9 13z" fill="#2f75b8"/></svg>
<div id="t81" class="tx " style="left:83.5px;top:863.50px;font-size:13px;color:#9c9dac;letter-spacing:-1.875px;">C..</div>
<svg style="position:absolute;left:107px;top:864.5px" width="16" height="16" viewBox="0 0 16 16"><circle cx="8" cy="8" r="7.200" fill="#fff" stroke="#3d7ec2" stroke-width="1.700"/><path d="M1.500 5.500h13M1.500 10.500h13" stroke="#3d7ec2" stroke-width="1.200"/><ellipse cx="8" cy="8" rx="3" ry="7.200" fill="none" stroke="#3d7ec2" stroke-width="1.300"/></svg>
<div id="t82" class="tx " style="left:127.5px;top:863.50px;font-size:13px;color:#9c9dac;letter-spacing:-1.635px;">S..</div>
<svg style="position:absolute;left:150.5px;top:864.5px" width="17" height="16" viewBox="0 0 17 16"><circle cx="8" cy="8" r="7.200" fill="#fff" stroke="#3d7ec2" stroke-width="1.700"/><path d="M1.500 5.500h13M1.500 10.500h13" stroke="#3d7ec2" stroke-width="1.200"/><ellipse cx="8" cy="8" rx="3" ry="7.200" fill="none" stroke="#3d7ec2" stroke-width="1.300"/><circle cx="12" cy="12" r="4.800" fill="#2ea24a" stroke="#2a2b3b" stroke-width=".9"/><path d="M9.600 12l1.800 1.900 3.200-3.500" stroke="#fff" stroke-width="1.500" fill="none"/></svg>
<div id="t83" class="tx " style="left:171.5px;top:863.50px;font-size:13px;color:#9c9dac;letter-spacing:-1.336px;">F...</div>
<svg style="position:absolute;left:196.5px;top:865px" width="15" height="15" viewBox="0 0 15 15"><path d="M1 0h14v14H1z" fill="#fff"/><path d="M1 0h14v2.500H1z" fill="#3d7ec2"/><path d="M9 5.500h4.500M9 7.500h4.500M9 9.500h4.500M9 11.500h4.500" stroke="#777" stroke-width="1"/><path d="M.6 6h5.400l2.600 2.600v6H.6z" fill="#fff" stroke="#2a2b3b" stroke-width="1.200"/><path d="M6 6v2.600h2.600" fill="none" stroke="#555" stroke-width=".8"/></svg>
<div id="t84" class="tx " style="left:217px;top:863.50px;font-size:13px;color:#9c9dac;letter-spacing:-1.073px;">P..</div>
<svg style="position:absolute;left:241.5px;top:864px" width="15" height="16" viewBox="0 0 15 16"><rect x="0" y="1.500" width="15" height="14.500" rx="1.200" fill="#f1b95e"/><path d="M5.500 0h4v2.500h-4z" fill="#d8d8d8" stroke="#2a2b3b" stroke-width=".6"/><path d="M2 3.500h11v10.500H2z" fill="#fff"/><path d="M3.500 5.500h8M3.500 7.500h8M3.500 9.500h8M3.500 11.500h8" stroke="#8a8a8a" stroke-width="1"/></svg>
<div id="t85" class="tx " style="left:261.5px;top:863.50px;font-size:13px;color:#9c9dac;letter-spacing:-0.911px;">T..</div>
<div id="t86" class="tx " style="left:13.5px;top:891.67px;font-size:12.5px;color:#fff;letter-spacing:0.066px;">css (Unix/Linux/Mac OS X)</div>
<div id="t87" class="tx " style="left:727px;top:891.67px;font-size:12.5px;color:#fff;letter-spacing:0.456px;">Insert</div>
<div id="t88" class="tx " style="left:809px;top:891.67px;font-size:12.5px;color:#fff;letter-spacing:0.328px;">Row</div>
<div id="t89" class="tx " style="left:885px;top:891.67px;font-size:12.5px;color:#fff;letter-spacing:0.060px;">Ln 465, Col 37 (5) ; ($3B=59)</div>
<div id="t90" class="tx " style="left:1093px;top:891.67px;font-size:12.5px;color:#fff;letter-spacing:0.180px;">Västeuropeiska (Windows)</div>
<svg style="position:absolute;left:1315px;top:899px;" width="8" height="8" viewBox="0 0 8 8"><path d="M6 0h2v2H6zM3 3h2v2H3zM6 3h2v2H6zM0 6h2v2H0zM3 6h2v2H3zM6 6h2v2H6z" fill="#9fa0b4"/></svg>
<svg style="position:absolute;left:293px;top:96.7px" width="12" height="16" viewBox="0 0 12 16"><path d="M.5 .5h7.500l3.500 3.500v11.500h-11z" fill="#ffd2c2" stroke="#b33100" stroke-width="1"/><path d="M8 .7v3.300h3.300" fill="#ffe8e0" stroke="#5e1a00" stroke-width=".9"/><path d="M5 8.800 2.400 10.700 5 12.600M7 8.800l2.600 1.900L7 12.600" stroke="#4e2214" stroke-width="1" fill="none"/><path d="M5 8.800h2M5 12.600h2" stroke="#b78a7c" stroke-width=".8"/><path d="M-1.500 15.800h15" stroke="#6a1800" stroke-width=".9" opacity=".85"/></svg>
<div id="t91" class="tx " style="left:311px;top:96.80px;font-size:13px;color:#a2a3ae;letter-spacing:-0.055px;">index.html</div>
<svg style="position:absolute;left:387.5px;top:96.5px" width="9" height="9" viewBox="0 0 9 9"><path d="M1 1l7 7M8 1l-7 7" stroke="#c4c4c8" stroke-width="2.100"/></svg>
<div style="position:absolute;left:386px;top:110.3px;width:11px;height:4px;background:#0ce30c;"></div>
<div style="position:absolute;left:401px;top:93px;width:104px;height:26px;background:linear-gradient(#70a8da 0%,#4a86c4 27%,#2a62b0 50%,#1050a2 73%,#0b4898 100%);"></div>
<svg style="position:absolute;left:409px;top:96.7px" width="12" height="16" viewBox="0 0 12 16"><path d="M.5 .5h7.500l3.500 3.500v11.500h-11z" fill="#c4fcc4" stroke="#078000" stroke-width="1"/><path d="M8 .7v3.300h3.300" fill="#dcffdc" stroke="#064a18" stroke-width=".9"/><text x="2" y="13.200" font-size="7.800" font-family="Liberation Sans,sans-serif" font-weight="700" fill="#0b6a10" textLength="8.200" lengthAdjust="spacingAndGlyphs">CSS</text><path d="M-1.500 15.800h15" stroke="#064a00" stroke-width=".9" opacity=".85"/></svg>
<div id="t92" class="tx " style="left:427px;top:96.80px;font-size:13px;color:#fff;letter-spacing:-0.372px;">style.css</div>
<svg style="position:absolute;left:492.5px;top:96.5px" width="9" height="9" viewBox="0 0 9 9"><path d="M1 1l7 7M8 1l-7 7" stroke="#fff" stroke-width="2.200"/></svg>
<svg style="position:absolute;left:515px;top:96.7px" width="12" height="16" viewBox="0 0 12 16"><path d="M.5 .5h7.500l3.500 3.500v11.500h-11z" fill="#c2c2ee" stroke="#3a3ac8" stroke-width="1"/><path d="M8 .7v3.300h3.300" fill="#dcdcfa" stroke="#14144a" stroke-width=".9"/><text x="2" y="13.200" font-size="8" font-family="Liberation Sans,sans-serif" fill="#182626" textLength="8.200" lengthAdjust="spacingAndGlyphs">JS</text><path d="M-1.500 15.800h15" stroke="#20208c" stroke-width=".9" opacity=".85"/></svg>
<div id="t93" class="tx " style="left:533.5px;top:96.80px;font-size:13px;color:#a2a3ae;letter-spacing:-0.312px;">main.js</div>
<svg style="position:absolute;left:590.5px;top:96.5px" width="9" height="9" viewBox="0 0 9 9"><path d="M1 1l7 7M8 1l-7 7" stroke="#c4c4c8" stroke-width="2.100"/></svg>
<div style="position:absolute;left:1272px;top:92px;width:23px;height:24px;background:transparent;box-sizing:border-box;border:1px solid #b9b9b9;"></div>
<svg style="position:absolute;left:1280.5px;top:102px;" width="8" height="4.5" viewBox="0 0 8 4.5"><path d="M0 0h8L4 4.500z" fill="#a6a6a6"/></svg>
<svg style="position:absolute;left:1302px;top:92px" width="15" height="15" viewBox="0 0 15 15"><path d="M0 0h7v7H0zM8 0h7v7H8zM0 8h7v7H0zM8 8h7v7H8z" fill="#3d7ec2"/><path d="M1.500 3.500h4M3.500 1.500v4M9.500 3.500h4M2 10l3 3M5 10l-3 3M9.500 10.300h4M9.500 12.700h4" stroke="#fff" stroke-width="1.100"/></svg>
<svg style="position:absolute;left:1301.5px;top:123.5px" width="17" height="17" viewBox="0 0 17 17"><path d="M6.500 0 10.300 4 4 9.700.2 6z" fill="#3d7ec2"/><path d="M11.500 5 16.500 9.800 14 12.200 9 7.300z" fill="#a24fc0"/><path d="M7.500 8.500 11.500 12.500 6.500 17 2.800 13z" fill="#f1b95e"/></svg>
<div class="clip" style="left:285px;top:119px;width:1010px;height:529px;background:#1b2332">
<div style="position:absolute;left:70px;top:264px;width:832px;height:22px;background:#3c415c;"></div>
<div style="position:absolute;left:380px;top:264px;width:52px;height:22px;background:#3e5a92;"></div>
<svg style="position:absolute;left:230.5px;top:282.8px;" width="70" height="3" viewBox="0 0 70 3"><path d="M0 2.500L2 0.3L4 2.5L6 0.3L8 2.5L10 0.3L12 2.5L14 0.3L16 2.5L18 0.3L20 2.5L22 0.3L24 2.5L26 0.3L28 2.5L30 0.3L32 2.5L34 0.3L36 2.5L38 0.3L40 2.5L42 0.3L44 2.5L46 0.3L48 2.5L50 0.3L52 2.5L54 0.3L56 2.5L58 0.3L60 2.5L62 0.3L64 2.5L66 0.3L68 2.5L70 0.3" stroke="#f02a2a" stroke-width="1" fill="none"/></svg>
<div style="position:absolute;left:59px;top:0px;width:1px;height:529px;background:repeating-linear-gradient(#4a5172 0 1px,transparent 1px 2px);"></div>
<div style="position:absolute;left:59px;top:264px;width:1.4px;height:238px;background:#8790b8;"></div>
<div style="position:absolute;left:59px;top:501px;width:7px;height:1.4px;background:#8790b8;"></div>
<div style="position:absolute;left:60px;top:83px;width:5px;height:1px;background:repeating-linear-gradient(90deg,#4a5172 0 1px,transparent 1px 2px);"></div>
<div style="position:absolute;left:60px;top:215px;width:5px;height:1px;background:repeating-linear-gradient(90deg,#4a5172 0 1px,transparent 1px 2px);"></div>
<div class="code" style="left:70.80000000000001px;top:1px;height:22px">  <span class="p">line-height</span><span class="q">:</span> <span class="n">56</span><span class="v">px</span><span class="q">;</span></div>
<div style="position:absolute;left:35.39999999999998px;top:9.9px;width:3.4px;height:3.4px;background:#d4e8ff;border-radius:50%;"></div>
<div class="code" style="left:70.80000000000001px;top:23px;height:22px">  <span class="p">text-transform</span><span class="q">:</span> <span class="v">uppercase</span><span class="q">;</span></div>
<div style="position:absolute;left:35.39999999999998px;top:31.9px;width:3.4px;height:3.4px;background:#d4e8ff;border-radius:50%;"></div>
<div class="code" style="left:70.80000000000001px;top:45px;height:22px">  <span class="p">color</span><span class="q">:</span> <span class="sw" style="background:#fff;color:#1b2030">#fff</span><span class="q">;</span></div>
<div style="position:absolute;left:34px;top:55px;width:6px;height:1.2px;background:#c4d6f0;"></div>
<div class="code" style="left:70.80000000000001px;top:67px;height:22px"><span class="b">}</span></div>
<div style="position:absolute;left:35.39999999999998px;top:75.9px;width:3.4px;height:3.4px;background:#d4e8ff;border-radius:50%;"></div>
<div class="code" style="left:70.80000000000001px;top:89px;height:22px"></div>
<div style="position:absolute;left:35.39999999999998px;top:97.9px;width:3.4px;height:3.4px;background:#d4e8ff;border-radius:50%;"></div>
<div class="code" style="left:70.80000000000001px;top:111px;height:22px"><span class="si">#home</span> <span class="st">h2</span> <span class="b">{</span></div>
<div style="position:absolute;left:35.39999999999998px;top:119.9px;width:3.4px;height:3.4px;background:#d4e8ff;border-radius:50%;"></div>
<div style="position:absolute;left:58px;top:110px;width:3px;height:22px;background:#1b2332;"></div>
<svg style="position:absolute;left:55px;top:117.5px;" width="11" height="8" viewBox="0 0 11 8"><path d="M.8 1.200 5.500 6.200 10.200 1.200" stroke="#5d638c" stroke-width="2" fill="none"/></svg>
<div class="code" style="left:70.80000000000001px;top:133px;height:22px">  <span class="p">color</span><span class="q">:</span> <span class="sw" style="background:#eee;color:#1b2030">#eee</span><span class="q">;</span></div>
<div style="position:absolute;left:35.39999999999998px;top:141.9px;width:3.4px;height:3.4px;background:#d4e8ff;border-radius:50%;"></div>
<div class="code" style="left:70.80000000000001px;top:155px;height:22px">  <span class="p">margin-bottom</span><span class="q">:</span> <span class="n">30</span><span class="v">px</span><span class="q">;</span></div>
<div class="code" style="left:13.800000000000011px;top:155px;color:#dfe3ee">460</div>
<div class="code" style="left:70.80000000000001px;top:177px;height:22px">  <span class="p">font-size</span><span class="q">:</span> <span class="n">24</span><span class="v">px</span><span class="q">;</span></div>
<div style="position:absolute;left:35.39999999999998px;top:185.9px;width:3.4px;height:3.4px;background:#d4e8ff;border-radius:50%;"></div>
<div class="code" style="left:70.80000000000001px;top:199px;height:22px"><span class="b">}</span></div>
<div style="position:absolute;left:35.39999999999998px;top:207.9px;width:3.4px;height:3.4px;background:#d4e8ff;border-radius:50%;"></div>
<div class="code" style="left:70.80000000000001px;top:221px;height:22px"></div>
<div style="position:absolute;left:35.39999999999998px;top:229.9px;width:3.4px;height:3.4px;background:#d4e8ff;border-radius:50%;"></div>
<div class="code" style="left:70.80000000000001px;top:243px;height:22px"><span class="si">#home</span> <span class="sc">.btn-get-started</span> <span class="b">{</span></div>
<div style="position:absolute;left:35.39999999999998px;top:251.9px;width:3.4px;height:3.4px;background:#d4e8ff;border-radius:50%;"></div>
<div style="position:absolute;left:58px;top:242px;width:3px;height:22px;background:#1b2332;"></div>
<svg style="position:absolute;left:55px;top:249.5px;" width="11" height="8" viewBox="0 0 11 8"><path d="M.8 1.200 5.500 6.200 10.200 1.200" stroke="#5d638c" stroke-width="2" fill="none"/></svg>
<div class="code" style="left:70.80000000000001px;top:265px;height:22px">  <span class="p">font-family</span><span class="q">:</span> <span class="s">"<span class="sq">Raleway</span>"</span><span class="q">,</span> <span class="v">sans-serif</span><span class="q">;</span></div>
<div class="code" style="left:13.800000000000011px;top:265px;color:#dfe3ee">465</div>
<div class="code" style="left:70.80000000000001px;top:287px;height:22px">  <span class="p">text-transform</span><span class="q">:</span> <span class="v">uppercase</span><span class="q">;</span></div>
<div style="position:absolute;left:35.39999999999998px;top:295.9px;width:3.4px;height:3.4px;background:#d4e8ff;border-radius:50%;"></div>
<div class="code" style="left:70.80000000000001px;top:309px;height:22px">  <span class="p">font-weight</span><span class="q">:</span> <span class="n">500</span><span class="q">;</span></div>
<div style="position:absolute;left:35.39999999999998px;top:317.9px;width:3.4px;height:3.4px;background:#d4e8ff;border-radius:50%;"></div>
<div class="code" style="left:70.80000000000001px;top:331px;height:22px">  <span class="p">font-size</span><span class="q">:</span> <span class="n">14</span><span class="v">px</span><span class="q">;</span></div>
<div style="position:absolute;left:35.39999999999998px;top:339.9px;width:3.4px;height:3.4px;background:#d4e8ff;border-radius:50%;"></div>
<div class="code" style="left:70.80000000000001px;top:353px;height:22px">  <span class="p">letter-spacing</span><span class="q">:</span> <span class="n">0.5</span><span class="v">px</span><span class="q">;</span></div>
<div style="position:absolute;left:35.39999999999998px;top:361.9px;width:3.4px;height:3.4px;background:#d4e8ff;border-radius:50%;"></div>
<div class="code" style="left:70.80000000000001px;top:375px;height:22px">  <span class="p">display</span><span class="q">:</span> <span class="v">inline-block</span><span class="q">;</span></div>
<div class="code" style="left:13.800000000000011px;top:375px;color:#dfe3ee">470</div>
<div class="code" style="left:70.80000000000001px;top:397px;height:22px">  <span class="p">padding</span><span class="q">:</span> <span class="n">10</span><span class="v">px</span> <span class="n">28</span><span class="v">px</span><span class="q">;</span></div>
<div style="position:absolute;left:35.39999999999998px;top:405.9px;width:3.4px;height:3.4px;background:#d4e8ff;border-radius:50%;"></div>
<div class="code" style="left:70.80000000000001px;top:419px;height:22px">  <span class="p">transition</span><span class="q">:</span> <span class="n">0.5</span><span class="v">s</span><span class="q">;</span></div>
<div style="position:absolute;left:35.39999999999998px;top:427.9px;width:3.4px;height:3.4px;background:#d4e8ff;border-radius:50%;"></div>
<div class="code" style="left:70.80000000000001px;top:441px;height:22px">  <span class="p">border</span><span class="q">:</span> <span class="n">2</span><span class="v">px</span> <span class="v">solid</span> <span class="sw" style="background:#fff;color:#1b2030">#fff</span><span class="q">;</span></div>
<div style="position:absolute;left:35.39999999999998px;top:449.9px;width:3.4px;height:3.4px;background:#d4e8ff;border-radius:50%;"></div>
<div class="code" style="left:70.80000000000001px;top:463px;height:22px">  <span class="p">color</span><span class="q">:</span> <span class="sw" style="background:#fff;color:#1b2030">#fff</span><span class="q">;</span></div>
<div style="position:absolute;left:35.39999999999998px;top:471.9px;width:3.4px;height:3.4px;background:#d4e8ff;border-radius:50%;"></div>
<div class="code" style="left:70.80000000000001px;top:485px;height:22px"><span class="b">}</span></div>
<div style="position:absolute;left:34px;top:495px;width:6px;height:1.2px;background:#c4d6f0;"></div>
<div class="code" style="left:70.80000000000001px;top:507px;height:22px"></div>
<div style="position:absolute;left:35.39999999999998px;top:515.9px;width:3.4px;height:3.4px;background:#d4e8ff;border-radius:50%;"></div>
<div class="code" style="left:70.80000000000001px;top:529px;height:22px"><span class="si">#home</span> <span class="sc">.btn-get-started</span><span class="sc">:hover</span> <span class="b">{</span></div>
<div style="position:absolute;left:35.39999999999998px;top:537.9px;width:3.4px;height:3.4px;background:#d4e8ff;border-radius:50%;"></div>
<div style="position:absolute;left:58px;top:528px;width:3px;height:22px;background:#1b2332;"></div>
<svg style="position:absolute;left:55px;top:535.5px;" width="11" height="8" viewBox="0 0 11 8"><path d="M.8 1.200 5.500 6.200 10.200 1.200" stroke="#5d638c" stroke-width="2" fill="none"/></svg>
<div style="position:absolute;left:902px;top:0px;width:1px;height:529px;background:#2a3145;"></div>
<div style="position:absolute;left:904px;top:190px;width:106px;height:5px;background:#3c415c;"></div>
<div style="position:absolute;left:907px;top:4.5px;transform:scale(.2);transform-origin:0 0;width:600px">
<div class="code mm" style="position:static;line-height:25px;height:25px;font-weight:700"><span class="cm cmd">/*--------------------------------------------------------------</span></div>
<div class="code mm" style="position:static;line-height:25px;height:25px;font-weight:700"><span class="cm"># Home Section</span></div>
<div class="code mm" style="position:static;line-height:25px;height:25px;font-weight:700"><span class="cm cmd">--------------------------------------------------------------*/</span></div>
<div class="code mm" style="position:static;line-height:25px;height:25px;font-weight:700"><span class="si">#home</span> <span class="b">{</span></div>
<div class="code mm" style="position:static;line-height:25px;height:25px;font-weight:700">  <span class="p">width</span><span class="q">:</span> <span class="n">100</span><span class="q">%</span><span class="q">;</span></div>
<div class="code mm" style="position:static;line-height:25px;height:25px;font-weight:700">  <span class="p">height</span><span class="q">:</span> <span class="v">calc</span><span class="v">(</span><span class="n">100</span><span class="v">vh</span> <span class="v">-</span> <span class="n">110</span><span class="v">px</span><span class="v">)</span><span class="q">;</span></div>
<div class="code mm" style="position:static;line-height:25px;height:25px;font-weight:700">  <span class="p">background</span><span class="q">:</span> <span class="v">url</span><span class="v">(</span><span class="s">"../img/hero-bg.jpg"</span><span class="v">)</span> <span class="v">top</span> <span class="v">center</span><span class="q">;</span></div>
<div class="code mm" style="position:static;line-height:25px;height:25px;font-weight:700">  <span class="p">background-size</span><span class="q">:</span> <span class="v">cover</span><span class="q">;</span></div>
<div class="code mm" style="position:static;line-height:25px;height:25px;font-weight:700">  <span class="p">position</span><span class="q">:</span> <span class="v">relative</span><span class="q">;</span></div>
<div class="code mm" style="position:static;line-height:25px;height:25px;font-weight:700"><span class="b">}</span></div>
<div class="code mm" style="position:static;line-height:25px;height:25px;font-weight:700"></div>
<div class="code mm" style="position:static;line-height:25px;height:25px;font-weight:700"><span class="si">#home</span><span class="sc">:before</span> <span class="b">{</span></div>
<div class="code mm" style="position:static;line-height:25px;height:25px;font-weight:700">  <span class="p">content</span><span class="q">:</span> <span class="s">""</span><span class="q">;</span></div>
<div class="code mm" style="position:static;line-height:25px;height:25px;font-weight:700">  <span class="p">background</span><span class="q">:</span> <span class="sw" style="background:#000;color:#e8e8e8">rgba(0, 0, 0, 0.5)</span><span class="q">;</span></div>
<div class="code mm" style="position:static;line-height:25px;height:25px;font-weight:700">  <span class="p">position</span><span class="q">:</span> <span class="v">absolute</span><span class="q">;</span></div>
<div class="code mm" style="position:static;line-height:25px;height:25px;font-weight:700">  <span class="p">bottom</span><span class="q">:</span> <span class="n">0</span><span class="q">;</span></div>
<div class="code mm" style="position:static;line-height:25px;height:25px;font-weight:700">  <span class="p">top</span><span class="q">:</span> <span class="n">0</span><span class="q">;</span></div>
<div class="code mm" style="position:static;line-height:25px;height:25px;font-weight:700">  <span class="p">left</span><span class="q">:</span> <span class="n">0</span><span class="q">;</span></div>
<div class="code mm" style="position:static;line-height:25px;height:25px;font-weight:700">  <span class="p">right</span><span class="q">:</span> <span class="n">0</span><span class="q">;</span></div>
<div class="code mm" style="position:static;line-height:25px;height:25px;font-weight:700"><span class="b">}</span></div>
<div class="code mm" style="position:static;line-height:25px;height:25px;font-weight:700"></div>
<div class="code mm" style="position:static;line-height:25px;height:25px;font-weight:700"><span class="si">#home</span> <span class="st">h1</span> <span class="b">{</span></div>
<div class="code mm" style="position:static;line-height:25px;height:25px;font-weight:700">  <span class="p">margin</span><span class="q">:</span> <span class="n">0</span> <span class="n">0</span> <span class="n">10</span><span class="v">px</span> <span class="n">0</span><span class="q">;</span></div>
<div class="code mm" style="position:static;line-height:25px;height:25px;font-weight:700">  <span class="p">font-size</span><span class="q">:</span> <span class="n">48</span><span class="v">px</span><span class="q">;</span></div>
<div class="code mm" style="position:static;line-height:25px;height:25px;font-weight:700">  <span class="p">font-weight</span><span class="q">:</span> <span class="n">700</span><span class="q">;</span></div>
<div class="code mm" style="position:static;line-height:25px;height:25px;font-weight:700">  <span class="p">line-height</span><span class="q">:</span> <span class="n">56</span><span class="v">px</span><span class="q">;</span></div>
<div class="code mm" style="position:static;line-height:25px;height:25px;font-weight:700">  <span class="p">text-transform</span><span class="q">:</span> <span class="v">uppercase</span><span class="q">;</span></div>
<div class="code mm" style="position:static;line-height:25px;height:25px;font-weight:700">  <span class="p">color</span><span class="q">:</span> <span class="sw" style="background:#fff;color:#1b2030">#fff</span><span class="q">;</span></div>
<div class="code mm" style="position:static;line-height:25px;height:25px;font-weight:700"><span class="b">}</span></div>
<div class="code mm" style="position:static;line-height:25px;height:25px;font-weight:700"></div>
<div class="code mm" style="position:static;line-height:25px;height:25px;font-weight:700"><span class="si">#home</span> <span class="st">h2</span> <span class="b">{</span></div>
<div class="code mm" style="position:static;line-height:25px;height:25px;font-weight:700">  <span class="p">color</span><span class="q">:</span> <span class="sw" style="background:#eee;color:#1b2030">#eee</span><span class="q">;</span></div>
<div class="code mm" style="position:static;line-height:25px;height:25px;font-weight:700">  <span class="p">margin-bottom</span><span class="q">:</span> <span class="n">30</span><span class="v">px</span><span class="q">;</span></div>
<div class="code mm" style="position:static;line-height:25px;height:25px;font-weight:700">  <span class="p">font-size</span><span class="q">:</span> <span class="n">24</span><span class="v">px</span><span class="q">;</span></div>
<div class="code mm" style="position:static;line-height:25px;height:25px;font-weight:700"><span class="b">}</span></div>
<div class="code mm" style="position:static;line-height:25px;height:25px;font-weight:700"></div>
<div class="code mm" style="position:static;line-height:25px;height:25px;font-weight:700"><span class="si">#home</span> <span class="sc">.btn-get-started</span> <span class="b">{</span></div>
<div class="code mm" style="position:static;line-height:25px;height:25px;font-weight:700">  <span class="p">font-family</span><span class="q">:</span> <span class="s">"<span class="sq">Raleway</span>"</span><span class="q">,</span> <span class="v">sans-serif</span><span class="q">;</span></div>
<div class="code mm" style="position:static;line-height:25px;height:25px;font-weight:700">  <span class="p">text-transform</span><span class="q">:</span> <span class="v">uppercase</span><span class="q">;</span></div>
<div class="code mm" style="position:static;line-height:25px;height:25px;font-weight:700">  <span class="p">font-weight</span><span class="q">:</span> <span class="n">500</span><span class="q">;</span></div>
<div class="code mm" style="position:static;line-height:25px;height:25px;font-weight:700">  <span class="p">font-size</span><span class="q">:</span> <span class="n">14</span><span class="v">px</span><span class="q">;</span></div>
<div class="code mm" style="position:static;line-height:25px;height:25px;font-weight:700">  <span class="p">letter-spacing</span><span class="q">:</span> <span class="n">0.5</span><span class="v">px</span><span class="q">;</span></div>
<div class="code mm" style="position:static;line-height:25px;height:25px;font-weight:700">  <span class="p">display</span><span class="q">:</span> <span class="v">inline-block</span><span class="q">;</span></div>
<div class="code mm" style="position:static;line-height:25px;height:25px;font-weight:700">  <span class="p">padding</span><span class="q">:</span> <span class="n">10</span><span class="v">px</span> <span class="n">28</span><span class="v">px</span><span class="q">;</span></div>
<div class="code mm" style="position:static;line-height:25px;height:25px;font-weight:700">  <span class="p">transition</span><span class="q">:</span> <span class="n">0.5</span><span class="v">s</span><span class="q">;</span></div>
<div class="code mm" style="position:static;line-height:25px;height:25px;font-weight:700">  <span class="p">border</span><span class="q">:</span> <span class="n">2</span><span class="v">px</span> <span class="v">solid</span> <span class="sw" style="background:#fff;color:#1b2030">#fff</span><span class="q">;</span></div>
<div class="code mm" style="position:static;line-height:25px;height:25px;font-weight:700">  <span class="p">color</span><span class="q">:</span> <span class="sw" style="background:#fff;color:#1b2030">#fff</span><span class="q">;</span></div>
<div class="code mm" style="position:static;line-height:25px;height:25px;font-weight:700"><span class="b">}</span></div>
<div class="code mm" style="position:static;line-height:25px;height:25px;font-weight:700"></div>
<div class="code mm" style="position:static;line-height:25px;height:25px;font-weight:700"><span class="si">#home</span> <span class="sc">.btn-get-started</span><span class="sc">:hover</span> <span class="b">{</span></div>
<div class="code mm" style="position:static;line-height:25px;height:25px;font-weight:700">  <span class="p">background</span><span class="q">:</span> <span class="sw" style="background:#ec2414;color:#fff">#ec2414</span><span class="q">;</span></div>
<div class="code mm" style="position:static;line-height:25px;height:25px;font-weight:700">  <span class="p">border-color</span><span class="q">:</span> <span class="sw" style="background:#ec2414;color:#fff">#ec2414</span><span class="q">;</span></div>
<div class="code mm" style="position:static;line-height:25px;height:25px;font-weight:700"><span class="b">}</span></div>
<div class="code mm" style="position:static;line-height:25px;height:25px;font-weight:700"></div>
<div class="code mm" style="position:static;line-height:25px;height:25px;font-weight:700"><span class="at">@media</span> <span class="st">(min-width: 1024px)</span> <span class="b">{</span></div>
<div class="code mm" style="position:static;line-height:25px;height:25px;font-weight:700">  <span class="si">#home</span> <span class="b">{</span></div>
<div class="code mm" style="position:static;line-height:25px;height:25px;font-weight:700">    <span class="p">background-attachment</span><span class="q">:</span> <span class="v">fixed</span><span class="q">;</span></div>
<div class="code mm" style="position:static;line-height:25px;height:25px;font-weight:700">  <span class="b">}</span></div>
<div class="code mm" style="position:static;line-height:25px;height:25px;font-weight:700"><span class="b">}</span></div>
<div class="code mm" style="position:static;line-height:25px;height:25px;font-weight:700"></div>
<div class="code mm" style="position:static;line-height:25px;height:25px;font-weight:700"><span class="at">@media</span> <span class="st">(max-width: 768px)</span> <span class="b">{</span></div>
<div class="code mm" style="position:static;line-height:25px;height:25px;font-weight:700">  <span class="si">#home</span> <span class="b">{</span></div>
<div class="code mm" style="position:static;line-height:25px;height:25px;font-weight:700">    <span class="p">text-align</span><span class="q">:</span> <span class="v">center</span><span class="q">;</span></div>
<div class="code mm" style="position:static;line-height:25px;height:25px;font-weight:700">  <span class="b">}</span></div>
<div class="code mm" style="position:static;line-height:25px;height:25px;font-weight:700"></div>
<div class="code mm" style="position:static;line-height:25px;height:25px;font-weight:700">  <span class="si">#home</span> <span class="sc">.container</span> <span class="b">{</span></div>
<div class="code mm" style="position:static;line-height:25px;height:25px;font-weight:700">    <span class="p">padding-top</span><span class="q">:</span> <span class="n">40</span><span class="v">px</span><span class="q">;</span></div>
<div class="code mm" style="position:static;line-height:25px;height:25px;font-weight:700">  <span class="b">}</span></div>
<div class="code mm" style="position:static;line-height:25px;height:25px;font-weight:700"></div>
<div class="code mm" style="position:static;line-height:25px;height:25px;font-weight:700">  <span class="si">#home</span> <span class="st">h1</span> <span class="b">{</span></div>
<div class="code mm" style="position:static;line-height:25px;height:25px;font-weight:700">    <span class="p">font-size</span><span class="q">:</span> <span class="n">28</span><span class="v">px</span><span class="q">;</span></div>
<div class="code mm" style="position:static;line-height:25px;height:25px;font-weight:700">    <span class="p">line-height</span><span class="q">:</span> <span class="n">36</span><span class="v">px</span><span class="q">;</span></div>
<div class="code mm" style="position:static;line-height:25px;height:25px;font-weight:700">  <span class="b">}</span></div>
<div class="code mm" style="position:static;line-height:25px;height:25px;font-weight:700"></div>
<div class="code mm" style="position:static;line-height:25px;height:25px;font-weight:700">  <span class="si">#home</span> <span class="st">h2</span> <span class="b">{</span></div>
<div class="code mm" style="position:static;line-height:25px;height:25px;font-weight:700">    <span class="p">font-size</span><span class="q">:</span> <span class="n">18</span><span class="v">px</span><span class="q">;</span></div>
<div class="code mm" style="position:static;line-height:25px;height:25px;font-weight:700">    <span class="p">line-height</span><span class="q">:</span> <span class="n">24</span><span class="v">px</span><span class="q">;</span></div>
<div class="code mm" style="position:static;line-height:25px;height:25px;font-weight:700">    <span class="p">margin-bottom</span><span class="q">:</span> <span class="n">30</span><span class="v">px</span><span class="q">;</span></div>
<div class="code mm" style="position:static;line-height:25px;height:25px;font-weight:700">  <span class="b">}</span></div>
<div class="code mm" style="position:static;line-height:25px;height:25px;font-weight:700"><span class="b">}</span></div>
<div class="code mm" style="position:static;line-height:25px;height:25px;font-weight:700"></div>
<div class="code mm" style="position:static;line-height:25px;height:25px;font-weight:700"><span class="cm cmd">/*--------------------------------------------------------------</span></div>
<div class="code mm" style="position:static;line-height:25px;height:25px;font-weight:700"><span class="cm"># Sections General</span></div>
<div class="code mm" style="position:static;line-height:25px;height:25px;font-weight:700"><span class="cm cmd">--------------------------------------------------------------*/</span></div>
<div class="code mm" style="position:static;line-height:25px;height:25px;font-weight:700"><span class="st">section</span> <span class="b">{</span></div>
<div class="code mm" style="position:static;line-height:25px;height:25px;font-weight:700">  <span class="p">padding</span><span class="q">:</span> <span class="n">60</span><span class="v">px</span> <span class="n">0</span><span class="q">;</span></div>
<div class="code mm" style="position:static;line-height:25px;height:25px;font-weight:700">  <span class="p">overflow</span><span class="q">:</span> <span class="v">hidden</span><span class="q">;</span></div>
<div class="code mm" style="position:static;line-height:25px;height:25px;font-weight:700"><span class="b">}</span></div>
<div class="code mm" style="position:static;line-height:25px;height:25px;font-weight:700"></div>
<div class="code mm" style="position:static;line-height:25px;height:25px;font-weight:700"><span class="sc">.section-title</span> <span class="b">{</span></div>
<div class="code mm" style="position:static;line-height:25px;height:25px;font-weight:700">  <span class="p">text-align</span><span class="q">:</span> <span class="v">center</span><span class="q">;</span></div>
<div class="code mm" style="position:static;line-height:25px;height:25px;font-weight:700">  <span class="p">padding</span><span class="q">:</span> <span class="n">30</span><span class="v">px</span> <span class="n">0</span><span class="q">;</span></div>
<div class="code mm" style="position:static;line-height:25px;height:25px;font-weight:700">  <span class="p">position</span><span class="q">:</span> <span class="v">relative</span><span class="q">;</span></div>
<div class="code mm" style="position:static;line-height:25px;height:25px;font-weight:700"><span class="b">}</span></div>
<div class="code mm" style="position:static;line-height:25px;height:25px;font-weight:700"></div>
<div class="code mm" style="position:static;line-height:25px;height:25px;font-weight:700"><span class="sc">.section-title</span> <span class="st">h2</span> <span class="b">{</span></div>
<div class="code mm" style="position:static;line-height:25px;height:25px;font-weight:700">  <span class="p">font-size</span><span class="q">:</span> <span class="n">32</span><span class="v">px</span><span class="q">;</span></div>
<div class="code mm" style="position:static;line-height:25px;height:25px;font-weight:700">  <span class="p">font-weight</span><span class="q">:</span> <span class="n">700</span><span class="q">;</span></div>
<div class="code mm" style="position:static;line-height:25px;height:25px;font-weight:700">  <span class="p">text-transform</span><span class="q">:</span> <span class="v">uppercase</span><span class="q">;</span></div>
<div class="code mm" style="position:static;line-height:25px;height:25px;font-weight:700">  <span class="p">margin-bottom</span><span class="q">:</span> <span class="n">20</span><span class="v">px</span><span class="q">;</span></div>
<div class="code mm" style="position:static;line-height:25px;height:25px;font-weight:700">  <span class="p">padding-bottom</span><span class="q">:</span> <span class="n">0</span><span class="q">;</span></div>
<div class="code mm" style="position:static;line-height:25px;height:25px;font-weight:700">  <span class="p">color</span><span class="q">:</span> <span class="sw" style="background:#2f2f2f;color:#fff">#2f2f2f</span><span class="q">;</span></div>
<div class="code mm" style="position:static;line-height:25px;height:25px;font-weight:700">  <span class="p">position</span><span class="q">:</span> <span class="v">relative</span><span class="q">;</span></div>
<div class="code mm" style="position:static;line-height:25px;height:25px;font-weight:700">  <span class="p">z-index</span><span class="q">:</span> <span class="n">2</span><span class="q">;</span></div>
<div class="code mm" style="position:static;line-height:25px;height:25px;font-weight:700"><span class="b">}</span></div>
<div class="code mm" style="position:static;line-height:25px;height:25px;font-weight:700"></div>
</div>
<div style="position:absolute;left:904px;top:130px;width:106px;height:125px;background:transparent;box-sizing:border-box;border:1px solid #566587;"></div>
</div>
<svg style="position:absolute;left:289.5px;top:651.5px" width="7" height="9" viewBox="0 0 7 9"><path d="M7 0v9L0 4.500z" fill="#8a8fb6"/></svg>
<svg style="position:absolute;left:1284px;top:651.5px" width="7" height="9" viewBox="0 0 7 9"><path d="M0 0v9l7-4.500z" fill="#8a8fb6"/></svg>
<div style="position:absolute;left:302px;top:655px;width:943px;height:2px;background:#7d83a8;border-radius:1px;"></div>
<svg style="position:absolute;left:291px;top:669px" width="16" height="16" viewBox="0 0 16 16"><path d="M8 0 0 8h2.500v8h4v-5h3v5h4V8H16L13.500 5.500V1h-2.300v2.200z" fill="#3d7ec2"/></svg>
<div id="t94" class="tx " style="left:311.5px;top:668.50px;font-size:13px;color:#fff;letter-spacing:-0.047px;">Home</div>
<div style="position:absolute;left:354px;top:666px;width:72px;height:24px;background:linear-gradient(#393b4f,#505269);box-sizing:border-box;border:1px solid #585a70;border-top:none;"></div>
<svg style="position:absolute;left:360.5px;top:668.5px" width="17" height="17" viewBox="0 0 17 17"><path d="M13.800 .3 16.700 3.200 15.300 4.600 12.400 1.700z" fill="#2a6cba"/><path d="M11.700 2.400 14.600 5.300 5 14.900 2.100 12z" fill="#2a6cba"/><path d="M1.600 12.700 4.300 15.400 .3 16.700z" fill="#2a6cba"/></svg>
<div id="t95" class="tx " style="left:381px;top:668.50px;font-size:13px;color:#fff;letter-spacing:0.089px;">Editor</div>
<svg style="position:absolute;left:434px;top:669px" width="16" height="16" viewBox="0 0 16 16"><defs><linearGradient id="eg1" x1="0" y1="0" x2="1" y2="1"><stop offset="0" stop-color="#35c1f1"/><stop offset="1" stop-color="#0c59a4"/></linearGradient><linearGradient id="eg2" x1="0" y1="0" x2="1" y2="0"><stop offset="0" stop-color="#2fbbe8"/><stop offset="1" stop-color="#5fd84a"/></linearGradient></defs><circle cx="8" cy="8" r="7.800" fill="url(#eg1)"/><path d="M.4 6.500C1.500 2.500 4.500.2 8 .2c4.500 0 7.800 3 7.800 6.500 0 2.600-2 4-4.200 4-1.500 0-2.400-.6-2.300-1.300.1-.6.700-.8.600-2C9.800 5.800 8.400 4.800 6.500 4.800 3.500 4.800 1 6.500.4 8z" fill="url(#eg2)"/><path d="M6.200 9.500c0 2.500 2 4.700 5.200 4.700 1.300 0 2.500-.4 3.300-.9C13.300 15.200 11 16 8.500 15.800 5.200 15.500 3 12.500 4 9.700c.5-1.300 1.600-2 2.500-2.200-.2.600-.3 1.300-.3 2z" fill="#0f4f9a"/></svg>
<div id="t96" class="tx " style="left:453px;top:668.50px;font-size:13px;color:#fff;letter-spacing:-0.143px;">Edge Preview</div>
<div style="position:absolute;left:539.5px;top:667px;width:1px;height:22px;background:#4b4d63;"></div>
<div style="position:absolute;left:670.5px;top:667px;width:1px;height:22px;background:#4b4d63;"></div>
<svg style="position:absolute;left:547px;top:669px" width="17" height="16" viewBox="0 0 17 16"><path d="M0 0h11v4H0z" fill="#f1b95e"/><path d="M3 4v10M3 8h4M3 13.500h4" stroke="#8a8a8a" stroke-width="1" fill="none"/><path d="M1.500 6.300h3.500v3.200H1.500zM1.500 12h3.500v3.200H1.500z" fill="#fff" stroke="#9a9a9a" stroke-width=".8"/><path d="M8 6h9v4H8zM8 12h9v4H8z" fill="#f1b95e"/></svg>
<div id="t97" class="tx " style="left:567px;top:668.50px;font-size:13px;color:#fff;letter-spacing:-0.078px;">File Commander</div>
<div style="position:absolute;left:284px;top:696px;width:1012px;height:22px;background:#5c5e70;"></div>
<div id="t98" class="tx " style="left:289.5px;top:698.50px;font-size:13px;color:#fff;letter-spacing:-0.368px;">Search Results</div>
<svg style="position:absolute;left:381px;top:704px;" width="878" height="7" viewBox="0 0 878 7"><defs><pattern id="gp2" width="4" height="4" patternUnits="userSpaceOnUse"><rect x="0" y="0" width="1" height="1" fill="#85879a"/><rect x="2" y="2" width="1" height="1" fill="#85879a"/></pattern></defs><rect width="882" height="7" fill="url(#gp2)"/></svg>
<svg style="position:absolute;left:1265.7px;top:701px" width="7" height="11" viewBox="0 0 7 11"><path d="M1.500 0.600h4v5.400h-4zM0 6.500h7M3.500 6.500V11" stroke="#fff" stroke-width="1.200" fill="none"/><path d="M4.300 1h1.200v5H4.300z" fill="#fff"/></svg>
<svg style="position:absolute;left:1280px;top:702px" width="10" height="8" viewBox="0 0 10 8"><path d="M.8 .6l8.400 6.800M9.200 .6.800 7.400" stroke="#fff" stroke-width="1.700"/></svg>
<div class="clip" style="left:285px;top:718px;width:994px;height:148px;background:#2a2b3b">
<div style="position:absolute;left:17px;top:0px;width:977px;height:22px;background:#7ab4fe;"></div>
<div style="position:absolute;left:31px;top:22px;width:963px;height:22px;background:#7dfeb0;"></div>
<div style="position:absolute;left:29px;top:88px;width:965px;height:22px;background:#0860a8;"></div>
<svg style="position:absolute;left:1.5px;top:3px" width="16" height="16" viewBox="0 0 16 16"><path d="M1 15.500 6 10" stroke="#2f6db5" stroke-width="2.200" stroke-linecap="round"/><circle cx="10" cy="6.500" r="5.400" fill="#fff" stroke="#2f6db5" stroke-width="1.400"/></svg>
<svg style="position:absolute;left:4.5px;top:29px" width="9" height="8" viewBox="0 0 9 8"><path d="M.8 1.500 4.500 5.500 8.200 1.500" stroke="#d0d0d4" stroke-width="1.700" fill="none"/></svg>
<svg style="position:absolute;left:17px;top:25px" width="12" height="15" viewBox="0 0 12 15"><path d="M.4 .4h7.800l3.400 3.400v10.800H.4z" fill="#fff" stroke="#444" stroke-width=".8"/><path d="M8 .4v3.600h3.600" fill="#ddd" stroke="#444" stroke-width=".6"/><path d="M2.300 5.500h7.400M2.300 7.500h7.400M2.300 9.500h7.400M2.300 11.500h7.400" stroke="#666" stroke-width="1"/></svg>
<div id="t99" class="tx " style="left:21px;top:0.28px;font-size:14.5px;color:#17358c;letter-spacing:0.233px;">Found  &quot;serif&quot;  (8 items found in 1 of 1 searched files)  -  2022-10-21 13:39:24</div>
<div id="t100" class="tx " style="left:35px;top:22.28px;font-size:14.5px;color:#1e7a3e;letter-spacing:0.218px;">C:\Users\Rickard\Documents\Mina Hemsidor\rj-texted.se\assets\css\style.css (Found: 8)</div>
<div id="t101" class="tx " style="left:33.39999999999998px;top:44.28px;font-size:14.5px;color:#fff;letter-spacing:-0.151px;">Line 12:</div>
<div id="t102" class="tx " style="left:119.69999999999999px;top:44.28px;font-size:14.5px;color:#fff;letter-spacing:0.158px;">font-family: &quot;Open Sans&quot;, sans-</div>
<div style="position:absolute;left:325.9px;top:46.99999999999996px;width:35.1px;height:16.8px;background:#8b0000;"></div>
<div id="t103" class="tx " style="left:326.4px;top:44.28px;font-size:14.5px;color:#ffe800;font-weight:700;letter-spacing:0.772px;">serif</div>
<div id="t104" class="tx " style="left:361.5px;top:44.28px;font-size:14.5px;color:#fff;">;</div>
<div id="t105" class="tx " style="left:33.39999999999998px;top:66.28px;font-size:14.5px;color:#fff;letter-spacing:-0.151px;">Line 32:</div>
<div id="t106" class="tx " style="left:119.69999999999999px;top:66.28px;font-size:14.5px;color:#fff;letter-spacing:0.129px;">font-family: &quot;Raleway&quot;, sans-</div>
<div style="position:absolute;left:307.79999999999995px;top:68.99999999999996px;width:35.1px;height:16.8px;background:#8b0000;"></div>
<div id="t107" class="tx " style="left:308.29999999999995px;top:66.28px;font-size:14.5px;color:#ffe800;font-weight:700;letter-spacing:0.772px;">serif</div>
<div id="t108" class="tx " style="left:343.4px;top:66.28px;font-size:14.5px;color:#fff;">;</div>
<div id="t109" class="tx " style="left:33.39999999999998px;top:88.28px;font-size:14.5px;color:#fff;letter-spacing:-0.186px;">Line 465:</div>
<div id="t110" class="tx " style="left:128.3px;top:88.28px;font-size:14.5px;color:#fff;letter-spacing:0.112px;">font-family: &quot;Raleway&quot;, sans-</div>
<div style="position:absolute;left:315.9px;top:90.99999999999996px;width:35.1px;height:16.8px;background:#8b0000;"></div>
<div id="t111" class="tx " style="left:316.4px;top:88.28px;font-size:14.5px;color:#ffe800;font-weight:700;letter-spacing:0.772px;">serif</div>
<div id="t112" class="tx " style="left:351.5px;top:88.28px;font-size:14.5px;color:#fff;">;</div>
<div id="t113" class="tx " style="left:33.39999999999998px;top:110.28px;font-size:14.5px;color:#fff;letter-spacing:-0.186px;">Line 765:</div>
<div id="t114" class="tx " style="left:128.3px;top:110.28px;font-size:14.5px;color:#fff;letter-spacing:0.112px;">font-family: &quot;Raleway&quot;, sans-</div>
<div style="position:absolute;left:315.9px;top:112.99999999999996px;width:35.1px;height:16.8px;background:#8b0000;"></div>
<div id="t115" class="tx " style="left:316.4px;top:110.28px;font-size:14.5px;color:#ffe800;font-weight:700;letter-spacing:0.772px;">serif</div>
<div id="t116" class="tx " style="left:351.5px;top:110.28px;font-size:14.5px;color:#fff;">;</div>
<div id="t117" class="tx " style="left:33.39999999999998px;top:132.28px;font-size:14.5px;color:#fff;letter-spacing:-0.186px;">Line 805:</div>
<div id="t118" class="tx " style="left:128.3px;top:132.28px;font-size:14.5px;color:#fff;letter-spacing:0.095px;">font-family: &quot;Poppins&quot;, sans-</div>
<div style="position:absolute;left:312.20000000000005px;top:134.99999999999994px;width:35.1px;height:16.8px;background:#8b0000;"></div>
<div id="t119" class="tx " style="left:312.70000000000005px;top:132.28px;font-size:14.5px;color:#ffe800;font-weight:700;letter-spacing:0.772px;">serif</div>
<div id="t120" class="tx " style="left:347.80000000000007px;top:132.28px;font-size:14.5px;color:#fff;">;</div>
</div>
<svg style="position:absolute;left:1282.5px;top:722.8px" width="9" height="6" viewBox="0 0 9 6"><path d="M0 6h9L4.500 0z" fill="#5e6284"/></svg>
<svg style="position:absolute;left:1282.5px;top:854px" width="9" height="6" viewBox="0 0 9 6"><path d="M0 0h9L4.500 6z" fill="#8a8fb6"/></svg>
<div style="position:absolute;left:1286px;top:735px;width:2px;height:68px;background:#7d83a8;"></div>
<svg style="position:absolute;left:289.5px;top:870px" width="7" height="9" viewBox="0 0 7 9"><path d="M7 0v9L0 4.500z" fill="#8a8fb6"/></svg>
<svg style="position:absolute;left:1267px;top:870px" width="7" height="9" viewBox="0 0 7 9"><path d="M0 0v9l7-4.500z" fill="#8a8fb6"/></svg>
<div style="position:absolute;left:302px;top:872.5px;width:310px;height:2px;background:#7d83a8;border-radius:1px;"></div>
<div style="position:absolute;left:0px;top:32px;width:1px;height:883px;background:#262836;"></div>
<div style="position:absolute;left:1333px;top:32px;width:1px;height:883px;background:#262836;"></div>
<div style="position:absolute;left:0px;top:914px;width:1334px;height:1px;background:#262836;"></div>
</div>
</body></html>
